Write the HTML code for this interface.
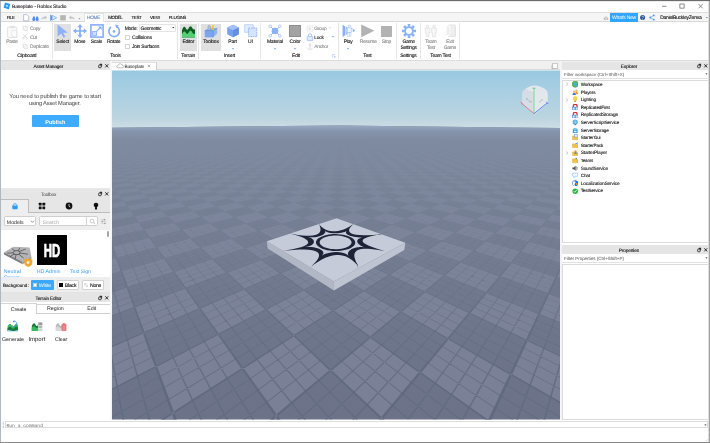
<!DOCTYPE html>
<html><head><meta charset="utf-8"><title>Baseplate - Roblox Studio</title>
<style>
html,body{margin:0;padding:0;background:#fff;}
body{width:710px;height:443px;overflow:hidden;position:relative;font-family:"Liberation Sans",sans-serif;}
#app{will-change:transform;position:absolute;left:0;top:0;width:710px;height:443px;overflow:hidden;background:#fff;}
#app div,#app svg{position:absolute;box-sizing:border-box;}
.t{white-space:nowrap;line-height:10px;text-rendering:geometricPrecision;}
.s{text-shadow:0 0 .4px rgba(20,20,20,.6);}
</style></head><body><div id="app">
<svg style="left:3px;top:2px;" width="8" height="8" viewBox="0 0 8 8"><rect x="1.2" y="1.2" width="5.4" height="5.4" fill="#1f9cfd" transform="rotate(14 4 4)"/><rect x="3" y="3" width="1.8" height="1.8" fill="#bfe3ff" transform="rotate(14 4 4)"/></svg>
<div class="t s" style="left:12.00px;top:3px;font-size:4.9px;color:#3a343a;letter-spacing:-0.086px;">Baseplate - Roblox Studio</div>
<svg style="left:655px;top:0px;" width="55" height="12" viewBox="0 0 55 12"><path d="M7 6.3h4.4" stroke="#444" stroke-width=".6"/><rect x="24.9" y="4" width="4.2" height="4.1" fill="none" stroke="#444" stroke-width=".6"/><path d="M43.5 4.1l4.2 4.2m0-4.2l-4.2 4.2" stroke="#444" stroke-width=".6"/></svg>
<div style="left:0px;top:12px;width:710px;height:10px;background:#f5f5f5;border-top:1px solid #dedede;border-bottom:1px solid #d9d9d9;"></div>
<div class="t s" style="left:6.80px;top:13px;font-size:4.4px;color:#222;letter-spacing:-0.373px;">FILE</div>
<svg style="left:22px;top:13px;" width="60" height="9" viewBox="0 0 60 9"><path d="M1.6 1.6h3.2l1.9 1.9v4.3h-5.1z" fill="#fff" stroke="#7a8fb8" stroke-width=".5"/><path d="M10.3 6.6a1.5 1.5 0 1 0 3 0l-.6-3.2h-1.6zM13.7 6.6a1.5 1.5 0 1 0 3 0l-.8-3.2h-1.6z" fill="#4a8df0"/><path d="M19.2 6.8c.3-2.2 1.9-3 3.6-3v-1.2l2.3 2-2.3 2v-1.2c-1.6 0-2.7.3-3.6 1.4z" fill="#c4c4c4"/><path d="M28.3 1.6v6.4l1.6-1.2v-4z" fill="#4a8df0"/><path d="M30.2 2.4l4.6 2.4-4.6 2.4z" fill="#dbe8ff" stroke="#4a8df0" stroke-width=".5"/><rect x="38.2" y="2.2" width="5.6" height="5.2" fill="#b5b5b5"/><path d="M52.8 6.8c-.3-2.2-1.9-3-3.6-3v-1.2l-2.3 2 2.3 2v-1.2c1.6 0 2.7.3 3.6 1.4z" fill="#c4c4c4"/><path d="M56.6 5.2h1.8l-.9 1.2z" fill="#4a8df0"/></svg>
<div style="left:84px;top:13px;width:19.5px;height:9px;background:#fff;border:1px solid #e4e4e4;border-bottom:none;"></div>
<div class="t s" style="left:87.00px;top:14px;font-size:4.8px;color:#7fb0f7;letter-spacing:-0.300px;">HOME</div>
<div class="t s" style="left:108.20px;top:13px;font-size:4.6px;color:#222;letter-spacing:-0.432px;">MODEL</div>
<div class="t s" style="left:131.50px;top:13px;font-size:4.5px;color:#222;letter-spacing:-0.400px;">TEST</div>
<div class="t s" style="left:149.90px;top:13px;font-size:4.4px;color:#222;letter-spacing:-0.361px;">VIEW</div>
<div class="t s" style="left:168.70px;top:13px;font-size:4.5px;color:#222;letter-spacing:-0.351px;">PLUGINS</div>
<svg style="left:603px;top:13px;" width="6" height="9" viewBox="0 0 6 9"><path d="M1 5.6l2-1.9 2 1.9v0.6h-4z" fill="none" stroke="#777" stroke-width=".5"/></svg>
<div style="left:610px;top:13px;width:28px;height:9px;background:#32a6fe;"></div>
<div class="t" style="left:612.07px;top:13px;font-size:5px;color:#fff;letter-spacing:-0.265px;">What's New</div>
<svg style="left:639px;top:13px;" width="18" height="9" viewBox="0 0 18 9"><circle cx="3.6" cy="4.5" r="2.5" fill="#2a4fa8"/><path d="M2.9 3.9a.8.8 0 1 1 1.1.8c-.3.2-.4.3-.4.7" fill="none" stroke="#fff" stroke-width=".6"/><circle cx="3.6" cy="6.2" r=".35" fill="#fff"/><path d="M14.8 2.4l-3.6 2.1 3.6 2.1" fill="none" stroke="#4a8df0" stroke-width=".6"/><circle cx="14.8" cy="2.4" r=".9" fill="#4a8df0"/><circle cx="11.2" cy="4.5" r=".9" fill="#4a8df0"/><circle cx="14.8" cy="6.6" r=".9" fill="#4a8df0"/></svg>
<div class="t s" style="left:660.20px;top:13px;font-size:5px;color:#222;letter-spacing:-0.238px;">DanielBuckleyZenva</div>
<svg style="left:704px;top:15px;" width="5" height="5" viewBox="0 0 5 5"><path d="M1.6 2h2.2l-1.1 1.3z" fill="#4a8df0"/></svg>
<div style="left:52px;top:23px;width:1px;height:36px;background:#e6e6e6;"></div>
<div style="left:177px;top:23px;width:1px;height:36px;background:#e6e6e6;"></div>
<div style="left:198.1px;top:23px;width:1px;height:36px;background:#e6e6e6;"></div>
<div style="left:259.9px;top:23px;width:1px;height:36px;background:#e6e6e6;"></div>
<div style="left:337.5px;top:23px;width:1px;height:36px;background:#e6e6e6;"></div>
<div style="left:395.8px;top:23px;width:1px;height:36px;background:#e6e6e6;"></div>
<div style="left:420.2px;top:23px;width:1px;height:36px;background:#e6e6e6;"></div>
<div style="left:459.2px;top:23px;width:1px;height:36px;background:#e6e6e6;"></div>
<div style="left:54px;top:23.5px;width:17px;height:27px;background:#e0e0e0;"></div>
<div style="left:180px;top:23.5px;width:16.8px;height:27px;background:#e0e0e0;"></div>
<div style="left:200.6px;top:23.5px;width:20.1px;height:27px;background:#e0e0e0;"></div>
<svg style="left:5px;top:24px;" width="15" height="15" viewBox="0 0 15 15"><rect x="2.6" y="3" width="9.2" height="10.6" rx=".6" fill="#fafafa" stroke="#d2d2d2" stroke-width=".6"/><rect x="5" y="1.8" width="4.4" height="2.4" fill="#e2e2e2"/><path d="M7 6.5h3.2l1.6 1.6v4.6h-4.8z" fill="#fff" stroke="#d2d2d2" stroke-width=".5"/></svg>
<div class="t s" style="left:6.15px;top:37px;font-size:5px;color:#b4b4b4;letter-spacing:-0.256px;">Paste</div>
<svg style="left:21px;top:24px;" width="8" height="26" viewBox="0 0 8 26"><path d="M2 2h3v1h1.6v3.6h-3v-1h-1.6z" fill="#f4f4f4" stroke="#d0d0d0" stroke-width=".5"/><path d="M2.2 10.4l3.8 3.6M5.8 10.4l-3.8 3.6" stroke="#cfcfcf" stroke-width=".7"/><circle cx="2.4" cy="14.4" r=".9" fill="none" stroke="#cfcfcf" stroke-width=".5"/><circle cx="5.6" cy="14.4" r=".9" fill="none" stroke="#cfcfcf" stroke-width=".5"/><path d="M2 20h3v1h1.6v3.6h-3v-1h-1.6z" fill="#f4f4f4" stroke="#d0d0d0" stroke-width=".5"/></svg>
<div class="t s" style="left:30.00px;top:25px;font-size:4.9px;color:#b4b4b4;letter-spacing:-0.285px;">Copy</div>
<div class="t s" style="left:30.00px;top:33px;font-size:5px;color:#b4b4b4;letter-spacing:-0.259px;">Cut</div>
<div class="t s" style="left:30.00px;top:42px;font-size:5px;color:#b4b4b4;letter-spacing:-0.232px;">Duplicate</div>
<div class="t s" style="left:17.17px;top:51px;font-size:5px;color:#2a2a2a;letter-spacing:-0.238px;">Clipboard</div>
<svg style="left:56px;top:23.7px;" width="14" height="14" viewBox="0 0 14 14"><path d="M1.6 .6l10.2 8.2h-4.6l2.2 4-1.9 1-2.2-4.2-3.7 3z" fill="#8ab1fc"/></svg>
<div class="t s" style="left:56.35px;top:37px;font-size:5px;color:#2a2a2a;letter-spacing:-0.232px;">Select</div>
<svg style="left:73px;top:23.7px;" width="14" height="14" viewBox="0 0 14 14"><path d="M7 2v10M2 7h10" stroke="#86aefb" stroke-width="1.700"/><path d="M7 0l2.700 3.200h-5.400zM7 14l2.700-3.200h-5.400zM0 7l3.200-2.700v5.400zM14 7l-3.200-2.700v5.400z" fill="#86aefb"/></svg>
<div class="t s" style="left:74.30px;top:37px;font-size:5px;color:#2a2a2a;letter-spacing:-0.306px;">Move</div>
<svg style="left:89.6px;top:23.7px;" width="14" height="14" viewBox="0 0 14 14"><rect x=".9" y=".9" width="12.200" height="12.200" fill="#fff" stroke="#86aefb" stroke-width="1.600"/><rect x="2.6" y="7.4" width="4" height="4" fill="#cfe0ff" stroke="#86aefb" stroke-width=".8"/><path d="M6.6 7.4l4.2-4.2" stroke="#86aefb" stroke-width="1.1"/><path d="M11.6 2.4v3.6l-3.6-3.6z" fill="#86aefb"/></svg>
<div class="t s" style="left:90.77px;top:37px;font-size:5px;color:#2a2a2a;letter-spacing:-0.250px;">Scale</div>
<svg style="left:106.6px;top:23.7px;" width="14" height="14" viewBox="0 0 14 14"><path d="M9.6 2.600a5.300 5.300 0 1 1-5.600.4" fill="none" stroke="#86aefb" stroke-width="1.700"/><path d="M8.2 .4l3.6 1.2-2.6 2.6z" fill="#86aefb"/><circle cx="7" cy="7.4" r="1.3" fill="#86aefb"/></svg>
<div class="t s" style="left:106.97px;top:37px;font-size:5px;color:#2a2a2a;letter-spacing:-0.246px;">Rotate</div>
<div class="t s" style="left:124.70px;top:24px;font-size:5px;color:#2a2a2a;letter-spacing:-0.259px;">Mode:</div>
<div style="left:139px;top:23.5px;width:37.2px;height:8.1px;background:#fff;border:1px solid #e4e4e4;border-radius:1px;"></div>
<div class="t s" style="left:140.60px;top:24px;font-size:5px;color:#2a2a2a;letter-spacing:-0.256px;">Geometric</div>
<svg style="left:171px;top:25px;" width="5" height="5" viewBox="0 0 5 5"><path d="M1.2 2h2.2l-1.1 1.3z" fill="#222"/></svg>
<div style="left:125.1px;top:35px;width:4.7px;height:4.7px;background:#fff;border:.6px solid #d6d6d6;"></div>
<div style="left:125.1px;top:44.2px;width:4.7px;height:4.7px;background:#fff;border:.6px solid #d6d6d6;"></div>
<div class="t s" style="left:131.90px;top:33px;font-size:5.1px;color:#2a2a2a;letter-spacing:-0.193px;">Collisions</div>
<div class="t s" style="left:131.90px;top:42px;font-size:5px;color:#2a2a2a;letter-spacing:-0.230px;">Join Surfaces</div>
<div class="t s" style="left:110.15px;top:51px;font-size:5px;color:#2a2a2a;letter-spacing:-0.233px;">Tools</div>
<svg style="left:181.8px;top:25.4px;" width="13.6" height="12.6" viewBox="0 0 13.6 12.6"><path d="M0 5.200c1.200-3.400 2.600-4.400 3.700-2.100c1 2.100 1.900 2.100 3 0c1.200-2.500 2.600-2.500 3.600 0c.9 1.900 1.900 2 3.300.2v9.300h-13.600z" fill="#0c5f22"/><path d="M0 9.300c1.200-3 2.600-3.800 3.700-1.700c1 1.900 1.900 1.900 3 0c1.200-2.300 2.600-2.300 3.600 0c.9 1.700 1.900 1.800 3.300.2v4.800h-13.600z" fill="#56cf74"/><path d="M8.200 1.800l1.800-1.600 2 2.600" fill="none" stroke="#cfd8cf" stroke-width=".4"/></svg>
<div class="t s" style="left:182.42px;top:37px;font-size:5px;color:#2a2a2a;letter-spacing:-0.218px;">Editor</div>
<div class="t s" style="left:181.22px;top:51px;font-size:5px;color:#2a2a2a;letter-spacing:-0.218px;">Terrain</div>
<svg style="left:203.6px;top:23.7px;" width="14" height="14" viewBox="0 0 14 14"><path d="M.8 6.600l4-2.600h8.400v5.400l-4 3.800h-8.400z" fill="#8db3f2"/><path d="M.8 6.600h8.400v6.600h-8.400z" fill="#7ba5ec"/><path d="M.8 6.600h8.400l4-2.600M9.200 6.600v6.600" stroke="#4d7fd6" stroke-width=".5" fill="none"/><rect x="8.100" y="1.200" width="1.700" height="5" fill="#f2c230"/><path d="M4 5.600v-3.400l1.200-1.200 1.200 1.200v3.400" fill="#b8c4d6" stroke="#6d7f9c" stroke-width=".4"/></svg>
<div class="t s" style="left:203.14px;top:37px;font-size:5px;color:#2a2a2a;letter-spacing:-0.246px;">Toolbox</div>
<svg style="left:225.6px;top:23.7px;" width="14" height="14" viewBox="0 0 14 14"><path d="M7 .8l5.800 2.600v6.800l-5.800 3-5.800-3v-6.800z" fill="#76a1ee"/><path d="M7 .8l5.800 2.600-5.800 2.800-5.800-2.800z" fill="#a3c2f8"/><path d="M7 6.200v7l5.800-3v-6.800z" fill="#638fe3"/></svg>
<div class="t s" style="left:228.37px;top:37px;font-size:5px;color:#2a2a2a;letter-spacing:-0.229px;">Part</div>
<svg style="left:230.5px;top:46.5px;" width="4" height="4" viewBox="0 0 4 4"><path d="M.9 1.200h2.200l-1.100 1.400z" fill="#4a8df0"/></svg>
<svg style="left:243.5px;top:23.7px;" width="14" height="14" viewBox="0 0 14 14"><rect x=".8" y=".8" width="8.400" height="7.400" fill="#e2ecff" stroke="#a9c5fa" stroke-width=".7"/><rect x="4.600" y="4" width="8.200" height="8.600" fill="#d5e4ff" stroke="#86aefb" stroke-width=".9" stroke-dasharray="1.600 .8"/></svg>
<div class="t s" style="left:248.05px;top:37px;font-size:5px;color:#2a2a2a;letter-spacing:-0.250px;">UI</div>
<div class="t s" style="left:223.77px;top:51px;font-size:5px;color:#2a2a2a;letter-spacing:-0.208px;">Insert</div>
<svg style="left:268px;top:23.7px;" width="14" height="14" viewBox="0 0 14 14"><path d="M2.400 2.400l9.200 9.200M11.600 2.400l-9.200 9.200" stroke="#86aefb" stroke-width=".8"/><circle cx="7" cy="7" r="3.300" fill="#8ab1fc"/><circle cx="2.200" cy="2.200" r="1.300" fill="#fff" stroke="#86aefb" stroke-width=".6"/><circle cx="11.800" cy="2.200" r="1.300" fill="#fff" stroke="#86aefb" stroke-width=".6"/><circle cx="2.200" cy="11.800" r="1.300" fill="#fff" stroke="#86aefb" stroke-width=".6"/><circle cx="11.800" cy="11.800" r="1.300" fill="#fff" stroke="#86aefb" stroke-width=".6"/></svg>
<div class="t s" style="left:266.90px;top:37px;font-size:5px;color:#2a2a2a;letter-spacing:-0.222px;">Material</div>
<svg style="left:273px;top:46.5px;" width="4" height="4" viewBox="0 0 4 4"><path d="M.9 1.200h2.200l-1.100 1.400z" fill="#4a8df0"/></svg>
<div style="left:288.9px;top:24.9px;width:12.4px;height:12.2px;background:#a3a3a3;border:.6px solid #8f8f8f;"></div>
<div class="t s" style="left:289.62px;top:37px;font-size:5px;color:#2a2a2a;letter-spacing:-0.239px;">Color</div>
<svg style="left:293px;top:46.5px;" width="4" height="4" viewBox="0 0 4 4"><path d="M.9 1.200h2.200l-1.100 1.400z" fill="#4a8df0"/></svg>
<svg style="left:305.5px;top:24.5px;" width="8" height="26" viewBox="0 0 8 26"><rect x="1" y="1" width="5.800" height="5" fill="none" stroke="#cfcfcf" stroke-width=".6" stroke-dasharray="1.400 .8"/><rect x="2.600" y="2.400" width="2.600" height="2.200" fill="#e0e0e0"/><path d="M2.400 11.400v-1.200a1.600 1.600 0 0 1 3.200 0v1.200" fill="none" stroke="#86aefb" stroke-width=".7"/><rect x="1.200" y="11.400" width="5.600" height="4.200" rx=".6" fill="#dfeaff" stroke="#86aefb" stroke-width=".6"/><path d="M4 19.400v5.200M2.800 20.800h2.400M1.600 22.800c.3 1.400 1.400 1.900 2.400 1.900s2.100-.5 2.400-1.900" fill="none" stroke="#cfcfcf" stroke-width=".6"/><circle cx="4" cy="18.900" r=".7" fill="none" stroke="#cfcfcf" stroke-width=".5"/></svg>
<div class="t s" style="left:314.20px;top:25px;font-size:4.8px;color:#b4b4b4;letter-spacing:-0.228px;">Group</div>
<svg style="left:327.9px;top:26px;" width="4" height="4" viewBox="0 0 4 4"><path d="M.9 1.800h2.200" stroke="#bbb" stroke-width=".5"/></svg>
<div class="t s" style="left:314.20px;top:34px;font-size:4.9px;color:#2a2a2a;letter-spacing:-0.213px;">Lock</div>
<svg style="left:331.2px;top:35.3px;" width="4" height="4" viewBox="0 0 4 4"><path d="M.9 1.200h2.200l-1.100 1.400z" fill="#4a8df0"/></svg>
<div class="t s" style="left:314.20px;top:43px;font-size:4.9px;color:#b4b4b4;letter-spacing:-0.254px;">Anchor</div>
<div class="t s" style="left:292.02px;top:51px;font-size:5px;color:#2a2a2a;letter-spacing:-0.215px;">Edit</div>
<svg style="left:331.6px;top:54px;" width="4" height="4" viewBox="0 0 4 4"><path d="M.6 .6h2.600M.6 .6v2.600" stroke="#8ab1fc" stroke-width=".5"/><path d="M3.400 1.600v1.800h-1.800z" fill="#8ab1fc"/></svg>
<svg style="left:341.5px;top:23.7px;" width="14" height="14" viewBox="0 0 14 14"><path d="M.6 .6v12.400l2.400-1.800v-8.600z" fill="#86aefb"/><path d="M3.400 2.600v8.600l2.200-1v-6.600z" fill="#a9c7fb"/><circle cx="7.400" cy="2.300" r="1.300" fill="#e8f0ff" stroke="#8db4f5" stroke-width=".4"/><rect x="5.600" y="3.900" width="3.600" height="4.700" fill="#eef4ff" stroke="#8db4f5" stroke-width=".4"/><rect x="4.300" y="4" width="1.200" height="3.600" fill="#eef4ff" stroke="#8db4f5" stroke-width=".3"/><rect x="9.300" y="4" width="1.200" height="3.600" fill="#eef4ff" stroke="#8db4f5" stroke-width=".3"/><rect x="5.800" y="8.700" width="1.500" height="3.600" fill="#eef4ff" stroke="#8db4f5" stroke-width=".3"/><rect x="7.500" y="8.700" width="1.500" height="3.600" fill="#eef4ff" stroke="#8db4f5" stroke-width=".3"/><path d="M11 5l2.400 1.600-2.400 1.600z" fill="#86aefb"/></svg>
<div class="t s" style="left:343.82px;top:37px;font-size:5px;color:#2a2a2a;letter-spacing:-0.243px;">Play</div>
<svg style="left:346.3px;top:46.5px;" width="4" height="4" viewBox="0 0 4 4"><path d="M.9 1.200h2.200l-1.100 1.400z" fill="#4a8df0"/></svg>
<svg style="left:361px;top:23.7px;" width="14" height="14" viewBox="0 0 14 14"><path d="M.2 .4l13.200 6.300-13.200 6.500z" fill="#b3b3b3"/></svg>
<div class="t s" style="left:359.72px;top:37px;font-size:5px;color:#b4b4b4;letter-spacing:-0.310px;">Resume</div>
<div style="left:381px;top:25.8px;width:11.2px;height:10.9px;background:#b3b3b3;"></div>
<div class="t s" style="left:381.87px;top:37px;font-size:5px;color:#b4b4b4;letter-spacing:-0.257px;">Stop</div>
<div class="t s" style="left:363.17px;top:51px;font-size:5px;color:#2a2a2a;letter-spacing:-0.229px;">Test</div>
<svg style="left:401.5px;top:23.7px;" width="14" height="14" viewBox="0 0 14 14"><rect x="5.700" y="-.1" width="2.600" height="2.800" rx=".6" fill="#8ab1fc" transform="rotate(0 7 7)"/><rect x="5.700" y="-.1" width="2.600" height="2.800" rx=".6" fill="#8ab1fc" transform="rotate(45 7 7)"/><rect x="5.700" y="-.1" width="2.600" height="2.800" rx=".6" fill="#8ab1fc" transform="rotate(90 7 7)"/><rect x="5.700" y="-.1" width="2.600" height="2.800" rx=".6" fill="#8ab1fc" transform="rotate(135 7 7)"/><rect x="5.700" y="-.1" width="2.600" height="2.800" rx=".6" fill="#8ab1fc" transform="rotate(180 7 7)"/><rect x="5.700" y="-.1" width="2.600" height="2.800" rx=".6" fill="#8ab1fc" transform="rotate(225 7 7)"/><rect x="5.700" y="-.1" width="2.600" height="2.800" rx=".6" fill="#8ab1fc" transform="rotate(270 7 7)"/><rect x="5.700" y="-.1" width="2.600" height="2.800" rx=".6" fill="#8ab1fc" transform="rotate(315 7 7)"/><circle cx="7" cy="7" r="3.900" fill="none" stroke="#8ab1fc" stroke-width="1.900"/></svg>
<div class="t s" style="left:402.47px;top:37px;font-size:5px;color:#2a2a2a;letter-spacing:-0.340px;">Game</div>
<div class="t s" style="left:400.47px;top:43px;font-size:5px;color:#2a2a2a;letter-spacing:-0.226px;">Settings</div>
<div class="t s" style="left:400.27px;top:51px;font-size:5px;color:#2a2a2a;letter-spacing:-0.226px;">Settings</div>
<svg style="left:424px;top:23.7px;" width="14" height="14" viewBox="0 0 14 14"><circle cx="3.6" cy="2.400" r="1.400" fill="#f6f6f6" stroke="#d4d4d4" stroke-width=".5"/><path d="M1.2 4.200h4.800v4.400h-1v4h-2.800v-4h-1z" fill="#f6f6f6" stroke="#d4d4d4" stroke-width=".5"/><circle cx="10.0" cy="2.400" r="1.400" fill="#f6f6f6" stroke="#d4d4d4" stroke-width=".5"/><path d="M7.6000000000000005 4.200h4.800v4.400h-1v4h-2.800v-4h-1z" fill="#f6f6f6" stroke="#d4d4d4" stroke-width=".5"/></svg>
<div class="t s" style="left:425.30px;top:37px;font-size:5px;color:#b4b4b4;letter-spacing:-0.306px;">Team</div>
<div class="t s" style="left:426.67px;top:43px;font-size:5px;color:#b4b4b4;letter-spacing:-0.229px;">Test</div>
<svg style="left:444px;top:23.7px;" width="13" height="14" viewBox="0 0 13 14"><path d="M4.400 1h7v11.400h-7" fill="#fafafa" stroke="#d4d4d4" stroke-width=".6"/><path d="M7.200 1.600l3.600 1.400v10l-3.600-1z" fill="#f0f0f0" stroke="#d9d9d9" stroke-width=".4"/><circle cx="4" cy="3.800" r="1" fill="none" stroke="#d4d4d4" stroke-width=".5"/><path d="M2.200 7.600l1.800-2 1.800 1.600M4 5.600v3l-1.800 2.600M4 8.600l1.800 2.400" fill="none" stroke="#d4d4d4" stroke-width=".6"/></svg>
<div class="t s" style="left:446.15px;top:37px;font-size:5px;color:#b4b4b4;letter-spacing:-0.208px;">Exit</div>
<div class="t s" style="left:443.77px;top:43px;font-size:5px;color:#b4b4b4;letter-spacing:-0.340px;">Game</div>
<div class="t s" style="left:430.19px;top:51px;font-size:5px;color:#2a2a2a;letter-spacing:-0.252px;">Team Test</div>
<div style="left:0px;top:59.5px;width:710px;height:1px;background:#dcdcdc;"></div>
<div style="left:0px;top:60.5px;width:710px;height:1px;background:#f0f0f0;"></div>
<div style="left:1px;top:61px;width:109px;height:9px;background:#e5e5e5;"></div>
<div style="left:110px;top:61px;width:2px;height:359px;background:#f6f6f6;"></div>
<div style="left:1px;top:61px;width:109px;height:9px;background:#e5e5e5;"></div>
<div class="t s" style="left:33.50px;top:63px;font-size:4.8px;color:#222;letter-spacing:-0.207px;">Asset Manager</div>
<svg style="left:97.7px;top:62.7px;" width="11" height="6" viewBox="0 0 11 6"><rect x="1.700" y=".7" width="2.400" height="2.700" rx=".4" fill="#2b2b2b"/><rect x=".7" y="2.100" width="2.400" height="2.600" rx=".4" fill="#fff" stroke="#2b2b2b" stroke-width=".9"/><path d="M7.300 1.300l2.900 3.100m0-3.100l-2.900 3.100" stroke="#111" stroke-width=".85"/></svg>
<div style="left:1px;top:70px;width:109px;height:118px;background:#fff;"></div>
<div class="t" style="left:9.30px;top:92px;font-size:5.8px;color:#3a3a3a;letter-spacing:-0.110px;">You need to publish the game to start</div>
<div class="t" style="left:29.10px;top:99px;font-size:5.7px;color:#3a3a3a;letter-spacing:-0.140px;">using Asset Manager.</div>
<div style="left:31.8px;top:114.6px;width:47.3px;height:12.1px;background:#3dabfe;border-radius:1px;"></div>
<div class="t" style="left:45.19px;top:118px;font-size:5.6px;color:#fff;font-weight:bold;">Publish</div>
<div style="left:1px;top:188px;width:109px;height:1.2px;background:#e9e9e9;"></div>
<div style="left:1px;top:189px;width:109px;height:103px;background:#eeeeee;"></div>
<div style="left:1px;top:189px;width:109px;height:9.5px;background:#e6e6e6;"></div>
<div class="t" style="left:41.12px;top:191px;font-size:4.8px;color:#444;letter-spacing:-0.197px;">Toolbox</div>
<svg style="left:97.7px;top:190.7px;" width="11" height="6" viewBox="0 0 11 6"><rect x="1.700" y=".7" width="2.400" height="2.700" rx=".4" fill="#2b2b2b"/><rect x=".7" y="2.100" width="2.400" height="2.600" rx=".4" fill="#fff" stroke="#2b2b2b" stroke-width=".9"/><path d="M7.300 1.300l2.900 3.100m0-3.100l-2.900 3.100" stroke="#111" stroke-width=".85"/></svg>
<div style="left:1px;top:198.5px;width:109px;height:14px;background:#e6e6e6;border-bottom:1px solid #bdbdbd;"></div>
<div style="left:1px;top:198.5px;width:27.6px;height:14px;background:#eeeeee;border-top:1px solid #bdbdbd;border-right:1px solid #bdbdbd;"></div>
<svg style="left:10.5px;top:202px;" width="8" height="8" viewBox="0 0 8 8"><path d="M2.400 3.400a1.600 1.800 0 0 1 3.200 0" fill="none" stroke="#2b9bf4" stroke-width=".8"/><path d="M1 3.400h6l-.6 3.800h-4.800z" fill="#2b9bf4"/></svg>
<svg style="left:37.5px;top:202px;" width="8" height="8" viewBox="0 0 8 8"><rect x=".8" y=".8" width="2.800" height="2.800" rx=".4" fill="#111"/><rect x="4.400" y=".8" width="2.800" height="2.800" rx=".4" fill="#111"/><rect x=".8" y="4.400" width="2.800" height="2.800" rx=".4" fill="#111"/><rect x="4.400" y="4.400" width="2.800" height="2.800" rx=".4" fill="#111"/></svg>
<svg style="left:64.8px;top:202px;" width="8" height="8" viewBox="0 0 8 8"><circle cx="4" cy="4" r="3.400" fill="#111"/><path d="M4 2v2.200l1.400 1" stroke="#fff" stroke-width=".7" fill="none"/></svg>
<svg style="left:92px;top:202px;" width="8" height="8" viewBox="0 0 8 8"><circle cx="4" cy="3" r="2.300" fill="#111"/><rect x="3" y="4.800" width="2" height="2.600" rx=".5" fill="#111"/></svg>
<div style="left:3.7px;top:216.3px;width:32.6px;height:10.2px;background:#fff;border:.7px solid #cfcfcf;border-radius:1.500px;"></div>
<div class="t" style="left:6.80px;top:218px;font-size:5.2px;color:#222;letter-spacing:0.023px;">Models</div>
<svg style="left:29.6px;top:219px;" width="5" height="5" viewBox="0 0 5 5"><path d="M1 1.800l1.500 1.500 1.500-1.500" fill="none" stroke="#444" stroke-width=".6"/></svg>
<div style="left:38.5px;top:216.3px;width:59.2px;height:10.2px;background:#fff;border:.7px solid #cfcfcf;border-radius:1.500px;"></div>
<div style="left:86.3px;top:216.6px;width:0.7px;height:9.6px;background:#d4d4d4;"></div>
<div class="t" style="left:42.60px;top:218px;font-size:5.2px;color:#a9a9a9;">Search</div>
<svg style="left:88.5px;top:218px;" width="7" height="7" viewBox="0 0 7 7"><circle cx="3" cy="3" r="1.900" fill="none" stroke="#aaa" stroke-width=".6"/><path d="M4.400 4.400l1.800 1.800" stroke="#aaa" stroke-width=".7"/></svg>
<svg style="left:100px;top:218px;" width="7" height="7" viewBox="0 0 7 7"><path d="M.8 1.600h5.400M.8 3.500h5.400M.8 5.400h5.400" stroke="#b9b9b9" stroke-width=".5"/><rect x="3.800" y=".9" width="1.200" height="1.400" fill="#9a9a9a"/><rect x="1.600" y="2.800" width="1.200" height="1.400" fill="#9a9a9a"/><rect x="4.200" y="4.700" width="1.200" height="1.400" fill="#9a9a9a"/></svg>
<div style="left:1px;top:229.7px;width:109px;height:47.5px;background:#fff;"></div>
<div style="left:106.5px;top:231px;width:2px;height:5.8px;background:#a6a6a6;border-radius:1px;"></div>
<svg style="left:3px;top:244px;" width="31" height="24" viewBox="0 0 31 24"><path d="M1 8.300l9.600-5.600 16 .9 1.800 9-8.800 5.200z" fill="#b4b4b7"/><path d="M1 8.300l18.600 9.500v2.400l-18.600-9.700z" fill="#808085"/><path d="M19.600 17.800l8.800-5.200v2.300l-8.800 5.300z" fill="#97979c"/><path d="M13.600 8.600l-5-4.400M13.600 8.600l3.400-4.800M13.600 8.600l9-3.600M13.600 8.600l11.400 1.600M13.600 8.600l7 5.400M13.600 8.600l-1.600 6.600M13.600 8.600l-9.400.6M13.600 8.600l-6.600 4" stroke="#3a3a3e" stroke-width=".8" opacity=".8"/><ellipse cx="13.600" cy="8.600" rx="3.400" ry="2" fill="#b4b4b7" stroke="#3a3a3e" stroke-width=".7"/><path d="M21.300 15.500l4-1 4 1v3.600c0 2-1.800 3.300-4 4-2.200-.7-4-2-4-4z" fill="#f2a72a"/><path d="M23.400 18.600l1.400-1.600 1.800.6-.4 2-1.800.6z" fill="#fff" opacity=".9"/></svg>
<div style="left:36.8px;top:235.1px;width:30px;height:30px;background:#000;"></div>
<svg style="left:36.8px;top:235.1px;" width="30" height="30" viewBox="0 0 30 30"><text x="15" y="21.700" font-family="Liberation Sans,sans-serif" font-weight="bold" font-size="17.500" text-anchor="middle" fill="#fff" stroke="#fff" stroke-width=".7" textLength="16.400" lengthAdjust="spacingAndGlyphs">HD</text></svg>
<div class="t" style="left:3.70px;top:267px;font-size:5.3px;color:#3d9ff5;letter-spacing:0.016px;">Neutral</div>
<div class="t" style="left:36.80px;top:267px;font-size:5.3px;color:#3d9ff5;letter-spacing:-0.020px;">HD Admin</div>
<div class="t" style="left:70.10px;top:267px;font-size:5.1px;color:#3d9ff5;letter-spacing:-0.020px;">Text Sign</div>
<div style="left:1px;top:272px;width:109px;height:5.2px;overflow:hidden">
<div class="t" style="left:2.70px;top:1px;font-size:5.2px;color:#3d9ff5;">Spawn</div>
</div>
<div style="left:1px;top:277.2px;width:109px;height:14.8px;background:#eeeeee;"></div>
<div class="t s" style="left:3.00px;top:281px;font-size:4.6px;color:#222;letter-spacing:-0.012px;">Background:</div>
<div style="left:30.9px;top:279.9px;width:23.2px;height:9.7px;background:#3aa9fd;border-radius:1px;"></div>
<div style="left:32.9px;top:282.5px;width:4.2px;height:4.4px;background:#fff;border:.5px solid #d0d0d0;"></div>
<div class="t" style="left:38.80px;top:281px;font-size:5.2px;color:#fff;letter-spacing:-0.256px;">White</div>
<div style="left:56.6px;top:279.9px;width:22.3px;height:9.7px;background:#fff;border:.6px solid #d2d2d2;border-radius:1px;"></div>
<div style="left:58.6px;top:282.5px;width:4.2px;height:4.4px;background:#000;"></div>
<div class="t s" style="left:64.80px;top:281px;font-size:5.2px;color:#222;letter-spacing:-0.245px;">Black</div>
<div style="left:81.6px;top:279.9px;width:22.7px;height:9.7px;background:#fff;border:.6px solid #d2d2d2;border-radius:1px;"></div>
<svg style="left:83.6px;top:282.5px;" width="4.4" height="4.4" viewBox="0 0 4.4 4.4"><rect width="4.400" height="4.400" fill="#fff" stroke="#ccc" stroke-width=".5"/><rect x=".3" y=".3" width="1.900" height="1.900" fill="#d6d6d6"/><rect x="2.200" y="2.200" width="1.900" height="1.900" fill="#d6d6d6"/></svg>
<div class="t s" style="left:90.00px;top:281px;font-size:5.2px;color:#222;letter-spacing:-0.299px;">None</div>
<div style="left:1px;top:291.8px;width:109px;height:1.2px;background:#e3e3e3;"></div>
<div style="left:1px;top:293px;width:109px;height:9.4px;background:#e5e5e5;"></div>
<div class="t s" style="left:35.42px;top:295px;font-size:4.8px;color:#222;letter-spacing:-0.170px;">Terrain Editor</div>
<svg style="left:97.7px;top:294.9px;" width="11" height="6" viewBox="0 0 11 6"><rect x="1.700" y=".7" width="2.400" height="2.700" rx=".4" fill="#2b2b2b"/><rect x=".7" y="2.100" width="2.400" height="2.600" rx=".4" fill="#fff" stroke="#2b2b2b" stroke-width=".9"/><path d="M7.300 1.300l2.900 3.100m0-3.100l-2.900 3.100" stroke="#111" stroke-width=".85"/></svg>
<div style="left:1px;top:302.4px;width:109px;height:117px;background:#fff;"></div>
<div style="left:36px;top:304px;width:74px;height:9.8px;background:#fff;border-top:1px solid #d4d4d4;border-bottom:1px solid #cfcfcf;"></div>
<div style="left:1px;top:302.9px;width:35.6px;height:11px;background:#fff;border-top:1px solid #d4d4d4;border-right:1px solid #cfcfcf;"></div>
<div class="t" style="left:10.65px;top:305px;font-size:5.3px;color:#222;">Create</div>
<div class="t" style="left:47.00px;top:304px;font-size:5.3px;color:#222;">Region</div>
<div class="t" style="left:87.23px;top:304px;font-size:5.3px;color:#222;">Edit</div>
<svg style="left:7.2px;top:319.5px;" width="12" height="12" viewBox="0 0 12 12"><path d="M.5 6.500c1.500-3 3-3.600 4.200-1.300 1 2 2 1.800 3-.2 1-1.800 2.200-1.600 3.300.6v5.400h-10.500z" fill="#3fb863"/><path d="M.5 8.500c1.500-2 3-2.600 4.200-.8 1 1.500 2 1.400 3-.2 1-1.300 2.200-1.200 3.300.4v3.100h-10.500z" fill="#167a36"/><path d="M.5 9.800c2 .2 4 1.200 6 1.200s3-.8 4.500-1v1.500h-10.500z" fill="#8fd0e8"/><path d="M6.200 1.400a2.700 2.700 0 1 1 -1.200 4" fill="none" stroke="#4a8df0" stroke-width=".8"/><path d="M7.300 .3l-1.700 1.100 1.600 1.400z" fill="#4a8df0"/></svg>
<svg style="left:31.2px;top:319.5px;" width="12" height="12" viewBox="0 0 12 12"><path d="M.8 6c1.300-3 2.600-3.600 3.700-1.300.9 2 1.700 1.800 2.600-.2v6.500h-6.300z" fill="#167a36"/><path d="M.8 8c1.300-2 2.600-2.600 3.700-.8.900 1.500 1.700 1.400 2.600-.2v4h-6.300z" fill="#3fb863"/><rect x="7.300" y="2.400" width="4" height="2.600" fill="#9a9a9a"/><rect x="7.300" y="5.400" width="4" height="2.600" fill="#b5b5b5"/><rect x="7.300" y="8.400" width="4" height="2.600" fill="#cfcfcf"/></svg>
<svg style="left:55.2px;top:319.5px;" width="12" height="12" viewBox="0 0 12 12"><path d="M.8 6c1.300-3 2.600-3.600 3.700-1.300.9 2 1.700 1.800 2.600-.2v6.500h-6.300z" fill="#b9b9b9"/><path d="M.8 8c1.300-2 2.600-2.600 3.700-.8.900 1.500 1.700 1.400 2.600-.2v4h-6.300z" fill="#d9d9d9"/><rect x="7" y="4.800" width="4" height="5.800" rx=".5" fill="#f08a8a" stroke="#d84a4a" stroke-width=".6"/><path d="M6.500 4.300h5M8 3.500h2" stroke="#d84a4a" stroke-width=".6"/></svg>
<div class="t" style="left:2.00px;top:335px;font-size:5.3px;color:#222;letter-spacing:-0.012px;">Generate</div>
<div class="t" style="left:28.40px;top:335px;font-size:6px;color:#222;letter-spacing:-0.017px;">Import</div>
<div class="t" style="left:54.90px;top:335px;font-size:5.2px;color:#222;letter-spacing:-0.005px;">Clear</div>
<div style="left:1px;top:419.5px;width:708px;height:23px;background:#fff;"></div>
<div style="left:4.7px;top:421.2px;width:703px;height:7.3px;background:#fff;border:.7px solid #dcdcdc;"></div>
<svg style="left:1.5px;top:421px;" width="3" height="8" viewBox="0 0 3 8"><path d="M1.200 .8v6.400" stroke="#777" stroke-width=".7" stroke-dasharray=".7 .7"/></svg>
<div class="t" style="left:6.40px;top:422px;font-size:4.7px;color:#707070;font-family:'Liberation Mono',monospace;">Run a command</div>
<svg style="left:703px;top:422.5px;" width="5" height="5" viewBox="0 0 5 5"><path d="M1.400 1.500h2.200l-1.100 1.300z" fill="#222"/></svg>
<svg style="left:704px;top:437px;" width="5" height="5" viewBox="0 0 5 5"><path d="M4.500 1.500l-3 3M4.500 3.200l-1.300 1.300" stroke="#bbb" stroke-width=".5"/></svg>
<div style="left:560px;top:61px;width:2.4px;height:359px;background:#f4f4f4;"></div>
<div style="left:562.4px;top:61.5px;width:146.6px;height:8.5px;background:#e5e5e5;"></div>
<div class="t s" style="left:620.71px;top:63px;font-size:4.8px;color:#222;letter-spacing:-0.186px;">Explorer</div>
<svg style="left:696.7px;top:62.95px;" width="11" height="6" viewBox="0 0 11 6"><rect x="1.700" y=".7" width="2.400" height="2.700" rx=".4" fill="#2b2b2b"/><rect x=".7" y="2.100" width="2.400" height="2.600" rx=".4" fill="#fff" stroke="#2b2b2b" stroke-width=".9"/><path d="M7.300 1.300l2.900 3.100m0-3.100l-2.900 3.100" stroke="#111" stroke-width=".85"/></svg>
<div style="left:562.4px;top:70px;width:146.6px;height:10px;background:#fff;"></div>
<div style="left:562.4px;top:78px;width:146.6px;height:0.8px;background:#e2e2e2;"></div>
<div class="t s" style="left:564.00px;top:70px;font-size:4.4px;color:#a0a0a0;letter-spacing:0.016px;">Filter workspace (Ctrl+Shift+X)</div>
<svg style="left:703.5px;top:72.2px;" width="5" height="5" viewBox="0 0 5 5"><path d="M1.500 1.500h2l-1 1.200z" fill="#222"/></svg>
<div style="left:562px;top:79.6px;width:147px;height:163.4px;background:#fff;border:.7px solid #dbdbdb;border-right:none;"></div>
<svg style="left:571.8px;top:81.2px;" width="6.4" height="6.4" viewBox="0 0 6.4 6.4"><circle cx="3.200" cy="3.200" r="3.100" fill="#4fc04f"/><path d="M2 1.400c1-.5 2.200-.3 2.600.5.400.9-.6 1.300-.2 2.100.3.700 1.100.6 1 1.400-.6.700-1.500 1-2.400.8-.4-.8 0-1.500-.6-2.100-.5-.5-.9-.8-.9-1.500 0-.5.200-.9.500-1.200z" fill="#49a8ea"/><circle cx="3.200" cy="3.200" r="3.100" fill="none" stroke="#3a9a3e" stroke-width=".4"/></svg>
<div class="t s" style="left:580.70px;top:80px;font-size:4.6px;color:#262626;letter-spacing:-0.136px;">Workspace</div>
<svg style="left:564.8px;top:82.4px;" width="4" height="4" viewBox="0 0 4 4"><path d="M1.200 .5l1.600 1.500-1.600 1.500" fill="none" stroke="#8a8a8a" stroke-width=".5"/></svg>
<svg style="left:571.8px;top:88.793px;" width="6.4" height="6.4" viewBox="0 0 6.4 6.4"><circle cx="2.200" cy="2.800" r="1.200" fill="#f0b27a"/><path d="M.4 6.200c0-1.600 1-2.200 1.800-2.200s1.800.6 1.800 2.200z" fill="#3a78d8"/><circle cx="4.500" cy="1.800" r="1.200" fill="#f0b27a"/><path d="M3 5c0-1.500.8-2 1.500-2s1.700.5 1.700 2.200h-2z" fill="#e8a11c"/></svg>
<div class="t s" style="left:580.70px;top:88px;font-size:4.7px;color:#262626;letter-spacing:-0.110px;">Players</div>
<svg style="left:571.8px;top:96.386px;" width="6.4" height="6.4" viewBox="0 0 6.4 6.4"><circle cx="3.200" cy="2.600" r="2.300" fill="#f7d34a"/><rect x="2.300" y="4.600" width="1.800" height="1.400" fill="#c9a227"/></svg>
<div class="t s" style="left:580.70px;top:95px;font-size:4.6px;color:#262626;letter-spacing:-0.109px;">Lighting</div>
<svg style="left:564.8px;top:97.586px;" width="4" height="4" viewBox="0 0 4 4"><path d="M1.200 .5l1.600 1.500-1.600 1.500" fill="none" stroke="#8a8a8a" stroke-width=".5"/></svg>
<svg style="left:571.8px;top:103.979px;" width="6.4" height="6.4" viewBox="0 0 6.4 6.4"><path d="M1.300 3v-.8a1.900 1.900 0 0 1 3.800 0v.8" fill="none" stroke="#d62c2c" stroke-width="1.200"/><rect x=".3" y="3.100" width="2.700" height="3" fill="#cfe0fa" stroke="#3a6fc8" stroke-width=".5"/><rect x="3.400" y="3.100" width="2.700" height="3" fill="#cfe0fa" stroke="#3a6fc8" stroke-width=".5"/></svg>
<div class="t s" style="left:580.70px;top:103px;font-size:4.6px;color:#262626;letter-spacing:-0.111px;">ReplicatedFirst</div>
<svg style="left:571.8px;top:111.572px;" width="6.4" height="6.4" viewBox="0 0 6.4 6.4"><path d="M1.300 3v-.8a1.900 1.900 0 0 1 3.800 0v.8" fill="none" stroke="#d62c2c" stroke-width="1.200"/><rect x=".3" y="3.100" width="2.700" height="3" fill="#cfe0fa" stroke="#3a6fc8" stroke-width=".5"/><rect x="3.400" y="3.100" width="2.700" height="3" fill="#cfe0fa" stroke="#3a6fc8" stroke-width=".5"/></svg>
<div class="t s" style="left:580.70px;top:111px;font-size:4.8px;color:#262626;letter-spacing:-0.129px;">ReplicatedStorage</div>
<svg style="left:571.8px;top:119.165px;" width="6.4" height="6.4" viewBox="0 0 6.4 6.4"><circle cx="3.200" cy="3" r="2.600" fill="#5aa8e0"/><path d="M1.500 3h3.400M3.200 1.200v3.600" stroke="#d8ecfa" stroke-width=".5"/><rect x="2.400" y="5.200" width="1.600" height="1" fill="#3f7fb8"/></svg>
<div class="t s" style="left:580.70px;top:118px;font-size:4.6px;color:#262626;letter-spacing:-0.108px;">ServerScriptService</div>
<svg style="left:571.8px;top:126.758px;" width="6.4" height="6.4" viewBox="0 0 6.4 6.4"><path d="M1 2.800c0-2 4.400-2 4.400 0z" fill="#bfe0f7" stroke="#2d8fd0" stroke-width=".5"/><rect x=".8" y="2.800" width="4.800" height="3.200" fill="#3d9be0"/><rect x="2" y="3.800" width="2.400" height="1.400" fill="#e6f3fc"/></svg>
<div class="t s" style="left:580.70px;top:126px;font-size:4.6px;color:#262626;letter-spacing:-0.124px;">ServerStorage</div>
<svg style="left:571.8px;top:134.351px;" width="6.4" height="6.4" viewBox="0 0 6.4 6.4"><path d="M.4 1.800h2.400l.6.800h2.600v3.200h-5.600z" fill="#f3c443" stroke="#c9992a" stroke-width=".3"/><rect x="2.400" y=".4" width="3.400" height="2.600" fill="#e8f0fc" stroke="#4a86dc" stroke-width=".4"/></svg>
<div class="t s" style="left:580.70px;top:133px;font-size:4.6px;color:#262626;letter-spacing:-0.114px;">StarterGui</div>
<svg style="left:571.8px;top:141.944px;" width="6.4" height="6.4" viewBox="0 0 6.4 6.4"><path d="M.4 1.800h2.400l.6.800h2.600v3.200h-5.600z" fill="#f3c443" stroke="#c9992a" stroke-width=".3"/><path d="M3 1.800l2.600-1.400.4.800-2.400 1.300z" fill="#4a86dc"/></svg>
<div class="t s" style="left:580.70px;top:141px;font-size:4.6px;color:#262626;letter-spacing:-0.130px;">StarterPack</div>
<svg style="left:571.8px;top:149.537px;" width="6.4" height="6.4" viewBox="0 0 6.4 6.4"><path d="M.4 1.800h2.400l.6.800h2.600v3.200h-5.600z" fill="#f3c443" stroke="#c9992a" stroke-width=".3"/><circle cx="3.600" cy="1.300" r="1.100" fill="#e8943a"/><path d="M2.400 3.800c0-1.200.6-1.500 1.200-1.500s1.200.3 1.200 1.500z" fill="#3a78d8"/></svg>
<div class="t s" style="left:580.70px;top:149px;font-size:4.8px;color:#262626;letter-spacing:-0.139px;">StarterPlayer</div>
<svg style="left:564.8px;top:150.737px;" width="4" height="4" viewBox="0 0 4 4"><path d="M1.200 .5l1.600 1.500-1.600 1.500" fill="none" stroke="#8a8a8a" stroke-width=".5"/></svg>
<svg style="left:571.8px;top:157.13px;" width="6.4" height="6.4" viewBox="0 0 6.4 6.4"><path d="M.4 1.800h2.400l.6.800h2.600v3.200h-5.600z" fill="#f3c443" stroke="#c9992a" stroke-width=".3"/><circle cx="4.200" cy="1.600" r=".9" fill="#888"/></svg>
<div class="t s" style="left:580.70px;top:156px;font-size:4.5px;color:#262626;letter-spacing:-0.171px;">Teams</div>
<svg style="left:571.8px;top:164.723px;" width="6.4" height="6.4" viewBox="0 0 6.4 6.4"><path d="M.4 2.400h1.400l1.800-1.600v5l-1.800-1.600h-1.400z" fill="#555"/><path d="M4.300 1v4.600M5.300 2v2.600" stroke="#666" stroke-width=".5"/></svg>
<div class="t s" style="left:580.70px;top:164px;font-size:4.7px;color:#262626;letter-spacing:-0.155px;">SoundService</div>
<svg style="left:571.8px;top:172.316px;" width="6.4" height="6.4" viewBox="0 0 6.4 6.4"><path d="M.6 1.200h5.200v3h-2.600l-1.200 1.400v-1.400h-1.400z" fill="#fff" stroke="#7fb5ee" stroke-width=".6"/></svg>
<div class="t s" style="left:580.70px;top:171px;font-size:4.6px;color:#262626;letter-spacing:-0.129px;">Chat</div>
<svg style="left:571.8px;top:179.909px;" width="6.4" height="6.4" viewBox="0 0 6.4 6.4"><circle cx="3.200" cy="3.200" r="3" fill="#1f6fd6"/><path d="M1.200 1.600c1.200-.6 2.200-.2 2.400.8.200 1-1 1-1 2s1 1.200.8 2c-1.400-.2-2.800-1.400-2.800-3.200 0-.6.200-1.200.6-1.600z" fill="#fff"/><circle cx="4.800" cy="4" r=".9" fill="#f0a030"/></svg>
<div class="t s" style="left:580.70px;top:180px;font-size:4.8px;color:#262626;letter-spacing:-0.129px;">LocalizationService</div>
<svg style="left:571.8px;top:187.502px;" width="6.4" height="6.4" viewBox="0 0 6.4 6.4"><circle cx="3.200" cy="3.200" r="2.800" fill="#2fb344"/><path d="M1.800 3.200l1 1.100 1.800-2.200" fill="none" stroke="#fff" stroke-width=".8"/></svg>
<div class="t s" style="left:580.70px;top:186px;font-size:4.6px;color:#262626;letter-spacing:-0.143px;">TestService</div>
<div style="left:562.4px;top:245.1px;width:146.6px;height:9.1px;background:#e5e5e5;"></div>
<div class="t s" style="left:618.87px;top:247px;font-size:4.8px;color:#222;letter-spacing:-0.182px;">Properties</div>
<svg style="left:696.7px;top:246.85px;" width="11" height="6" viewBox="0 0 11 6"><rect x="1.700" y=".7" width="2.400" height="2.700" rx=".4" fill="#2b2b2b"/><rect x=".7" y="2.100" width="2.400" height="2.600" rx=".4" fill="#fff" stroke="#2b2b2b" stroke-width=".9"/><path d="M7.300 1.300l2.900 3.100m0-3.100l-2.900 3.100" stroke="#111" stroke-width=".85"/></svg>
<div style="left:562.4px;top:254.2px;width:146.6px;height:10px;background:#fff;"></div>
<div style="left:562.4px;top:262px;width:146.6px;height:0.8px;background:#e2e2e2;"></div>
<div class="t s" style="left:564.00px;top:254px;font-size:4.5px;color:#a0a0a0;letter-spacing:-0.012px;">Filter Properties (Ctrl+Shift+P)</div>
<svg style="left:703.5px;top:256.2px;" width="5" height="5" viewBox="0 0 5 5"><path d="M1.500 1.500h2l-1 1.200z" fill="#222"/></svg>
<div style="left:562px;top:263.6px;width:147px;height:156.4px;background:#fff;border:.7px solid #dbdbdb;border-right:none;"></div>
<div style="left:112px;top:61.2px;width:448px;height:9.3px;background:#f0f0f0;border-bottom:1px solid #dadada;"></div>
<div style="left:112px;top:61.7px;width:45px;height:8.8px;background:#fff;border-right:1px solid #cccccc;border-top:.5px solid #e0e0e0;"></div>
<svg style="left:115.5px;top:63.3px;" width="8" height="6" viewBox="0 0 8 6"><path d="M2 4.800a1.300 1.300 0 0 1 .2-2.600 2 2 0 0 1 3.800-.2 1.400 1.400 0 0 1 .2 2.800z" fill="#fff" stroke="#888" stroke-width=".5"/></svg>
<div class="t" style="left:124.50px;top:63px;font-size:4.8px;color:#1a1a1a;letter-spacing:-0.194px;">Baseplate</div>
<svg style="left:146.7px;top:64.3px;" width="4" height="4" viewBox="0 0 4 4"><path d="M.8.800l2.400 2.400m0-2.400l-2.400 2.400" stroke="#666" stroke-width=".5"/></svg>
<svg style="left:550.5px;top:62px;" width="8" height="8" viewBox="0 0 8 8"><rect x="1.700" y="1.300" width="4.800" height="5.400" fill="#fafafa" stroke="#ababab" stroke-width=".6"/><path d="M1.700 3.200h-.9v3.500h2.600" fill="none" stroke="#ababab" stroke-width=".5"/></svg>
<svg style="left:112px;top:70px" width="448" height="350" viewBox="112 70 448 350"><defs><linearGradient id="sky" x1="0" y1="70.5" x2="0" y2="126.0" gradientUnits="userSpaceOnUse"><stop offset="0" stop-color="#98c8e1"/><stop offset=".26" stop-color="#a4cde2"/><stop offset=".53" stop-color="#afd1e2"/><stop offset=".71" stop-color="#b6d3e1"/><stop offset=".856" stop-color="#bcd5e0"/><stop offset=".946" stop-color="#c4d9e2"/><stop offset="1" stop-color="#cadce4"/></linearGradient><linearGradient id="fog" x1="0" y1="126.0" x2="0" y2="419.4" gradientUnits="userSpaceOnUse"><stop offset="0.000" stop-color="#98a9c1" stop-opacity="0.97"/><stop offset="0.007" stop-color="#93a5bd" stop-opacity="0.9"/><stop offset="0.020" stop-color="#8ea0b8" stop-opacity="0.72"/><stop offset="0.048" stop-color="#8d9eb3" stop-opacity="0.56"/><stop offset="0.099" stop-color="#8d9eb3" stop-opacity="0.5"/><stop offset="0.150" stop-color="#8d9eb3" stop-opacity="0.43"/><stop offset="0.286" stop-color="#8d9eb3" stop-opacity="0.3"/><stop offset="0.423" stop-color="#8d9eb3" stop-opacity="0.22"/><stop offset="0.559" stop-color="#8d9eb3" stop-opacity="0.13"/><stop offset="0.798" stop-color="#8d9eb3" stop-opacity="0.03"/><stop offset="1.000" stop-color="#8d9eb3" stop-opacity="0"/></linearGradient><linearGradient id="gt" x1="0" y1="126.0" x2="0" y2="419.4" gradientUnits="userSpaceOnUse"><stop offset="0.000" stop-color="#fff" stop-opacity="0"/><stop offset="0.055" stop-color="#fff" stop-opacity="0"/><stop offset="0.082" stop-color="#fff" stop-opacity="0.25"/><stop offset="0.123" stop-color="#fff" stop-opacity="0.45"/><stop offset="0.201" stop-color="#fff" stop-opacity="0.6"/><stop offset="0.303" stop-color="#fff" stop-opacity="0.72"/><stop offset="0.457" stop-color="#fff" stop-opacity="0.85"/><stop offset="0.661" stop-color="#fff" stop-opacity="1"/><stop offset="1.000" stop-color="#fff" stop-opacity="1"/></linearGradient><linearGradient id="gl" x1="0" y1="126.0" x2="0" y2="419.4" gradientUnits="userSpaceOnUse"><stop offset="0.000" stop-color="#fff" stop-opacity="0"/><stop offset="0.201" stop-color="#fff" stop-opacity="0"/><stop offset="0.293" stop-color="#fff" stop-opacity="0.3"/><stop offset="0.389" stop-color="#fff" stop-opacity="0.6"/><stop offset="0.525" stop-color="#fff" stop-opacity="0.85"/><stop offset="0.729" stop-color="#fff" stop-opacity="1"/><stop offset="1.000" stop-color="#fff" stop-opacity="1"/></linearGradient><mask id="mt" maskUnits="userSpaceOnUse" x="112" y="70" width="448" height="350"><rect x="112" y="70" width="448" height="350" fill="url(#gt)"/></mask><mask id="ml" maskUnits="userSpaceOnUse" x="112" y="70" width="448" height="350"><rect x="112" y="70" width="448" height="350" fill="url(#gl)"/></mask><clipPath id="vc"><rect x="112.0" y="70.5" width="448.0" height="348.9"/></clipPath></defs><g clip-path="url(#vc)"><rect x="112" y="70" width="448" height="58.0" fill="url(#sky)"/><polygon points="112,127.7 340.6,125.5 560,128 560,420 112,420" fill="#6c7388"/><g mask="url(#mt)"><path fill="#7a8095" d="M73.9 584.7L197.7 481.4L172.9 413.0L72.4 477.3zM71.4 410.3L156.0 366.5L143.8 332.8L70.7 364.6zM70.3 331.4L134.5 307.3L127.3 287.2L69.9 306.2zM69.6 286.4L121.4 271.1L116.6 257.8L69.4 270.4zM69.2 257.2L112.6 246.7L109.2 237.3L69.0 246.2zM237.7 591.6L325.9 485.6L276.3 415.8L197.7 481.4zM172.9 413.0L242.6 368.4L218.3 334.2L156.0 366.5zM143.8 332.8L199.9 308.4L185.5 288.1L134.5 307.3zM127.3 287.2L173.9 271.8L164.4 258.4L121.4 271.1zM116.6 257.8L156.5 247.2L149.7 237.7L112.6 246.7zM109.2 237.3L143.9 229.6L138.9 222.5L106.2 229.2zM103.7 222.2L134.4 216.3L130.5 210.8L101.4 216.0zM99.4 210.5L127.1 205.9L123.9 201.5L97.7 205.7zM96.1 201.3L121.1 197.6L118.6 194.0L94.7 197.4zM93.4 193.8L116.3 190.8L114.2 187.8L92.2 190.6zM91.1 187.6L112.2 185.1L110.5 182.5L90.2 184.9zM406.4 598.8L457.1 489.9L381.6 418.6L325.9 485.6zM276.3 415.8L330.6 370.4L293.8 335.7L242.6 368.4zM218.3 334.2L266.1 309.5L244.4 289.0L199.9 308.4zM185.5 288.1L226.9 272.5L212.6 259.0L173.9 271.8zM164.4 258.4L200.7 247.8L190.6 238.2L156.5 247.2zM149.7 237.7L181.8 230.0L174.3 222.8L143.9 229.6zM138.9 222.5L167.7 216.6L161.8 211.1L134.4 216.3zM130.5 210.8L156.6 206.1L151.9 201.7L127.1 205.9zM123.9 201.5L147.7 197.8L143.9 194.2L121.1 197.6zM118.6 194.0L140.5 190.9L137.3 187.9L116.3 190.8zM114.2 187.8L134.4 185.2L131.7 182.7L112.2 185.1zM110.5 182.5L129.3 180.3L127.0 178.2L108.8 180.2zM107.3 178.1L124.9 176.2L122.9 174.3L105.9 176.1zM104.5 174.2L121.1 172.6L119.3 170.9L103.3 172.5zM102.1 170.9L117.7 169.4L116.2 168.0L101.1 169.3zM100.0 167.9L114.8 166.6L113.4 165.3L99.1 166.6zM98.2 165.3L112.1 164.1L110.9 163.0L97.3 164.1zM381.6 418.6L420.0 372.4L370.4 337.2L330.6 370.4zM293.8 335.7L333.1 310.6L303.9 289.9L266.1 309.5zM244.4 289.0L280.5 273.3L261.3 259.6L226.9 272.5zM212.6 259.0L245.3 248.3L231.7 238.6L200.7 247.8zM190.6 238.2L220.1 230.3L209.9 223.2L181.8 230.0zM174.3 222.8L201.1 216.9L193.3 211.3L167.7 216.6zM161.8 211.1L186.3 206.4L180.1 201.9L156.6 206.1zM151.9 201.7L174.5 198.0L169.4 194.3L147.7 197.8zM143.9 194.2L164.8 191.1L160.6 188.1L140.5 190.9zM137.3 187.9L156.7 185.3L153.1 182.8L134.4 185.2zM131.7 182.7L149.8 180.4L146.8 178.3L129.3 180.3zM127.0 178.2L144.0 176.3L141.3 174.4L124.9 176.2zM122.9 174.3L138.9 172.7L136.6 171.0L121.1 172.6zM119.3 170.9L134.4 169.5L132.4 168.0L117.7 169.4zM116.2 168.0L130.5 166.7L128.7 165.4L114.8 166.6zM113.4 165.3L127.0 164.2L125.4 163.1L112.1 164.1zM110.9 163.0L123.8 162.0L122.4 160.9L109.8 161.9zM108.7 160.9L121.0 160.0L119.7 159.0L107.7 159.9zM106.7 159.0L118.5 158.2L117.3 157.3L105.7 158.1zM104.8 157.3L116.1 156.5L115.1 155.7L104.0 156.5zM103.2 155.7L114.0 155.0L113.0 154.3L102.4 155.0zM101.7 154.3L112.1 153.6L111.2 153.0L100.9 153.6zM489.0 421.4L510.9 374.4L448.1 338.7L420.0 372.4zM370.4 337.2L400.8 311.8L364.0 290.8L333.1 310.6zM303.9 289.9L334.6 274.0L310.4 260.3L280.5 273.3zM261.3 259.6L290.2 248.8L273.2 239.1L245.3 248.3zM231.7 238.6L258.5 230.7L245.8 223.5L220.1 230.3zM209.9 223.2L234.7 217.2L224.9 211.6L201.1 216.9zM193.3 211.3L216.2 206.6L208.4 202.1L186.3 206.4zM180.1 201.9L201.3 198.1L195.0 194.5L174.5 198.0zM169.4 194.3L189.2 191.2L183.9 188.2L164.8 191.1zM160.6 188.1L179.0 185.4L174.6 182.9L156.7 185.3zM153.1 182.8L170.5 180.6L166.7 178.4L149.8 180.4zM146.8 178.3L163.1 176.4L159.8 174.5L144.0 176.3zM141.3 174.4L156.7 172.7L153.9 171.1L138.9 172.7zM136.6 171.0L151.1 169.6L148.6 168.1L134.4 169.5zM132.4 168.0L146.2 166.8L144.0 165.5L130.5 166.7zM128.7 165.4L141.8 164.3L139.8 163.1L127.0 164.2zM125.4 163.1L137.9 162.0L136.1 161.0L123.8 162.0zM122.4 160.9L134.4 160.0L132.8 159.1L121.0 160.0zM119.7 159.0L131.2 158.2L129.7 157.4L118.5 158.2zM117.3 157.3L128.3 156.5L126.9 155.8L116.1 156.5zM115.1 155.7L125.6 155.0L124.4 154.3L114.0 155.0zM113.0 154.3L123.2 153.6L122.1 153.0L112.1 153.6zM111.2 153.0L121.0 152.4L119.9 151.8L110.3 152.3zM109.4 151.7L118.9 151.2L117.9 150.6L108.6 151.2zM107.9 150.6L117.0 150.1L116.1 149.6L107.1 150.1zM106.4 149.6L115.2 149.1L114.4 148.6L105.7 149.1zM105.0 148.6L113.6 148.2L112.8 147.7L104.4 148.1zM103.7 147.7L112.0 147.3L111.3 146.9L103.1 147.3zM598.5 424.3L603.2 376.5L526.8 340.2L510.9 374.4zM448.1 338.7L469.5 312.9L424.9 291.7L400.8 311.8zM364.0 290.8L389.2 274.8L359.9 260.9L334.6 274.0zM310.4 260.3L335.6 249.3L315.0 239.5L290.2 248.8zM273.2 239.1L297.3 231.1L282.0 223.8L258.5 230.7zM245.8 223.5L268.6 217.4L256.7 211.8L234.7 217.2zM224.9 211.6L246.2 206.8L236.8 202.4L216.2 206.6zM208.4 202.1L228.3 198.3L220.7 194.7L201.3 198.1zM195.0 194.5L213.7 191.4L207.3 188.3L189.2 191.2zM183.9 188.2L201.5 185.6L196.1 183.0L179.0 185.4zM174.6 182.9L191.2 180.7L186.6 178.5L170.5 180.6zM166.7 178.4L182.3 176.5L178.4 174.6L163.1 176.4zM159.8 174.5L174.7 172.8L171.2 171.2L156.7 172.7zM153.9 171.1L167.9 169.6L164.9 168.2L151.1 169.6zM148.6 168.1L162.0 166.8L159.3 165.5L146.2 166.8zM144.0 165.5L156.8 164.3L154.3 163.2L141.8 164.3zM139.8 163.1L152.1 162.1L149.9 161.0L137.9 162.0zM136.1 161.0L147.8 160.1L145.9 159.1L134.4 160.0zM132.8 159.1L144.0 158.2L142.2 157.4L131.2 158.2zM129.7 157.4L140.5 156.6L138.9 155.8L128.3 156.5zM126.9 155.8L137.3 155.1L135.8 154.4L125.6 155.0zM124.4 154.3L134.4 153.7L133.0 153.0L123.2 153.6zM122.1 153.0L131.7 152.4L130.4 151.8L121.0 152.4zM119.9 151.8L129.2 151.2L128.1 150.7L118.9 151.2zM117.9 150.6L126.9 150.1L125.8 149.6L117.0 150.1zM116.1 149.6L124.8 149.1L123.8 148.6L115.2 149.1zM114.4 148.6L122.8 148.2L121.9 147.7L113.6 148.2zM112.8 147.7L121.0 147.3L120.1 146.9L112.0 147.3zM111.3 146.9L119.2 146.5L118.4 146.1L110.6 146.5zM109.9 146.1L117.6 145.7L116.8 145.3L109.2 145.7zM108.6 145.3L116.1 145.0L115.4 144.6L108.0 145.0zM107.4 144.6L114.6 144.3L114.0 144.0L106.8 144.3zM526.8 340.2L538.9 314.1L486.3 292.7L469.5 312.9zM424.9 291.7L444.3 275.5L409.9 261.5L389.2 274.8zM359.9 260.9L381.3 249.8L357.0 239.9L335.6 249.3zM315.0 239.5L336.3 231.5L318.3 224.2L297.3 231.1zM282.0 223.8L302.6 217.7L288.7 212.1L268.6 217.4zM256.7 211.8L276.4 207.1L265.4 202.6L246.2 206.8zM236.8 202.4L255.4 198.5L246.5 194.9L228.3 198.3zM220.7 194.7L238.3 191.5L230.9 188.5L213.7 191.4zM207.3 188.3L224.0 185.7L217.8 183.1L201.5 185.6zM196.1 183.0L212.0 180.8L206.6 178.6L191.2 180.7zM186.6 178.5L201.6 176.6L197.0 174.7L182.3 176.5zM178.4 174.6L192.6 172.9L188.6 171.3L174.7 172.8zM171.2 171.2L184.8 169.7L181.2 168.3L167.9 169.6zM164.9 168.2L177.9 166.9L174.7 165.6L162.0 166.8zM159.3 165.5L171.7 164.4L168.9 163.2L156.8 164.3zM154.3 163.2L166.2 162.1L163.7 161.1L152.1 162.1zM149.9 161.0L161.3 160.1L159.0 159.2L147.8 160.1zM145.9 159.1L156.8 158.3L154.7 157.4L144.0 158.2zM142.2 157.4L152.7 156.6L150.8 155.8L140.5 156.6zM138.9 155.8L149.0 155.1L147.3 154.4L137.3 155.1zM135.8 154.4L145.6 153.7L144.0 153.1L134.4 153.7zM133.0 153.0L142.4 152.4L141.0 151.8L131.7 152.4zM130.4 151.8L139.6 151.3L138.2 150.7L129.2 151.2zM128.1 150.7L136.9 150.2L135.6 149.6L126.9 150.1zM125.8 149.6L134.4 149.1L133.2 148.7L124.8 149.1zM123.8 148.6L132.1 148.2L131.0 147.8L122.8 148.2zM121.9 147.7L129.9 147.3L128.9 146.9L121.0 147.3zM120.1 146.9L127.9 146.5L126.9 146.1L119.2 146.5zM118.4 146.1L126.0 145.7L125.1 145.4L117.6 145.7zM116.8 145.3L124.2 145.0L123.4 144.7L116.1 145.0zM115.4 144.6L122.5 144.3L121.7 144.0L114.6 144.3zM606.7 341.7L609.3 315.3L548.5 293.6L538.9 314.1zM486.3 292.7L500.0 276.3L460.3 262.1L444.3 275.5zM409.9 261.5L427.3 250.4L399.5 240.4L381.3 249.8zM357.0 239.9L375.6 231.9L354.9 224.5L336.3 231.5zM318.3 224.2L336.8 218.0L320.9 212.3L302.6 217.7zM288.7 212.1L306.8 207.3L294.1 202.8L276.4 207.1zM265.4 202.6L282.7 198.7L272.4 195.0L255.4 198.5zM246.5 194.9L263.0 191.7L254.5 188.6L238.3 191.5zM230.9 188.5L246.7 185.8L239.5 183.3L224.0 185.7zM217.8 183.1L232.8 180.9L226.7 178.7L212.0 180.8zM206.6 178.6L221.0 176.7L215.6 174.8L201.6 176.6zM197.0 174.7L210.7 173.0L206.0 171.3L192.6 172.9zM188.6 171.3L201.7 169.8L197.6 168.3L184.8 169.7zM181.2 168.3L193.8 166.9L190.1 165.7L177.9 166.9zM174.7 165.6L186.7 164.4L183.5 163.3L171.7 164.4zM168.9 163.2L180.4 162.2L177.5 161.1L166.2 162.1zM163.7 161.1L174.8 160.2L172.1 159.2L161.3 160.1zM159.0 159.2L169.6 158.3L167.2 157.5L156.8 158.3zM154.7 157.4L165.0 156.7L162.8 155.9L152.7 156.6zM150.8 155.8L160.7 155.1L158.7 154.4L149.0 155.1zM147.3 154.4L156.8 153.7L155.0 153.1L145.6 153.7zM144.0 153.1L153.2 152.5L151.5 151.9L142.4 152.4zM141.0 151.8L149.9 151.3L148.3 150.7L139.6 151.3zM138.2 150.7L146.8 150.2L145.4 149.7L136.9 150.2zM135.6 149.6L144.0 149.2L142.6 148.7L134.4 149.1zM133.2 148.7L141.3 148.2L140.1 147.8L132.1 148.2zM131.0 147.8L138.9 147.3L137.7 146.9L129.9 147.3zM128.9 146.9L136.6 146.5L135.5 146.1L127.9 146.5zM126.9 146.1L134.4 145.7L133.4 145.4L126.0 145.7zM125.1 145.4L132.3 145.0L131.4 144.7L124.2 145.0zM123.4 144.7L130.4 144.3L129.5 144.0L122.5 144.3zM548.5 293.6L556.2 277.1L511.2 262.8L500.0 276.3zM460.3 262.1L473.8 250.9L442.2 240.9L427.3 250.4zM399.5 240.4L415.2 232.3L391.8 224.8L375.6 231.9zM354.9 224.5L371.3 218.3L353.3 212.6L336.8 218.0zM320.9 212.3L337.3 207.5L323.0 203.0L306.8 207.3zM294.1 202.8L310.1 198.9L298.5 195.2L282.7 198.7zM272.4 195.0L287.9 191.8L278.2 188.8L263.0 191.7zM254.5 188.6L269.4 186.0L261.3 183.4L246.7 185.8zM239.5 183.3L253.8 181.0L246.8 178.8L232.8 180.9zM226.7 178.7L240.4 176.8L234.4 174.8L221.0 176.7zM215.6 174.8L228.8 173.1L223.6 171.4L210.7 173.0zM206.0 171.3L218.7 169.9L214.0 168.4L201.7 169.8zM197.6 168.3L209.7 167.0L205.6 165.7L193.8 166.9zM190.1 165.7L201.8 164.5L198.1 163.3L186.7 164.4zM183.5 163.3L194.7 162.2L191.4 161.2L180.4 162.2zM177.5 161.1L188.3 160.2L185.3 159.3L174.8 160.2zM172.1 159.2L182.5 158.4L179.8 157.5L169.6 158.3zM167.2 157.5L177.2 156.7L174.8 155.9L165.0 156.7zM162.8 155.9L172.4 155.2L170.2 154.5L160.7 155.1zM158.7 154.4L168.0 153.8L166.0 153.1L156.8 153.7zM155.0 153.1L164.0 152.5L162.1 151.9L153.2 152.5zM151.5 151.9L160.3 151.3L158.5 150.8L149.9 151.3zM148.3 150.7L156.8 150.2L155.2 149.7L146.8 150.2zM145.4 149.7L153.6 149.2L152.1 148.7L144.0 149.2zM142.6 148.7L150.6 148.2L149.2 147.8L141.3 148.2zM140.1 147.8L147.8 147.4L146.5 146.9L138.9 147.3zM137.7 146.9L145.2 146.5L144.0 146.1L136.6 146.5zM135.5 146.1L142.8 145.8L141.6 145.4L134.4 145.7zM133.4 145.4L140.5 145.0L139.4 144.7L132.3 145.0zM131.4 144.7L138.3 144.3L137.3 144.0L130.4 144.3zM129.5 144.0L136.3 143.7L135.3 143.4L128.6 143.7zM611.3 294.6L613.0 277.8L562.6 263.4L556.2 277.1zM511.2 262.8L520.6 251.4L485.3 241.3L473.8 250.9zM442.2 240.9L455.0 232.7L428.9 225.2L415.2 232.3zM391.8 224.8L406.0 218.6L385.9 212.9L371.3 218.3zM353.3 212.6L368.0 207.8L352.0 203.2L337.3 207.5zM323.0 203.0L337.6 199.1L324.6 195.4L310.1 198.9zM298.5 195.2L312.8 192.0L302.1 188.9L287.9 191.8zM278.2 188.8L292.2 186.1L283.2 183.5L269.4 186.0zM261.3 183.4L274.8 181.1L267.1 178.9L253.8 181.0zM246.8 178.8L259.9 176.9L253.2 174.9L240.4 176.8zM234.4 174.8L247.0 173.2L241.1 171.5L228.8 173.1zM223.6 171.4L235.7 169.9L230.5 168.5L218.7 169.9zM214.0 168.4L225.7 167.1L221.1 165.8L209.7 167.0zM205.6 165.7L216.8 164.5L212.8 163.4L201.8 164.5zM198.1 163.3L208.9 162.3L205.3 161.2L194.7 162.2zM191.4 161.2L201.8 160.3L198.5 159.3L188.3 160.2zM185.3 159.3L195.4 158.4L192.4 157.6L182.5 158.4zM179.8 157.5L189.5 156.7L186.8 156.0L177.2 156.7zM174.8 155.9L184.2 155.2L181.7 154.5L172.4 155.2zM170.2 154.5L179.3 153.8L177.0 153.2L168.0 153.8zM166.0 153.1L174.8 152.5L172.7 151.9L164.0 152.5zM162.1 151.9L170.7 151.3L168.7 150.8L160.3 151.3zM158.5 150.8L166.8 150.2L165.0 149.7L156.8 150.2zM155.2 149.7L163.2 149.2L161.6 148.7L153.6 149.2zM152.1 148.7L159.9 148.3L158.3 147.8L150.6 148.2zM149.2 147.8L156.8 147.4L155.4 147.0L147.8 147.4zM146.5 146.9L153.9 146.6L152.5 146.2L145.2 146.5zM144.0 146.1L151.2 145.8L149.9 145.4L142.8 145.8zM141.6 145.4L148.7 145.0L147.4 144.7L140.5 145.0zM139.4 144.7L146.3 144.4L145.1 144.0L138.3 144.3zM137.3 144.0L144.0 143.7L142.9 143.4L136.3 143.7zM562.6 263.4L567.9 252.0L528.7 241.8L520.6 251.4zM485.3 241.3L495.2 233.1L466.2 225.5L455.0 232.7zM428.9 225.2L440.9 218.9L418.6 213.1L406.0 218.6zM385.9 212.9L398.8 208.0L381.2 203.4L368.0 207.8zM352.0 203.2L365.3 199.3L350.9 195.5L337.6 199.1zM324.6 195.4L337.9 192.2L326.0 189.1L312.8 192.0zM302.1 188.9L315.1 186.2L305.1 183.6L292.2 186.1zM283.2 183.5L295.9 181.2L287.4 179.0L274.8 181.1zM267.1 178.9L279.4 176.9L272.1 175.0L259.9 176.9zM253.2 174.9L265.2 173.2L258.7 171.6L247.0 173.2zM241.1 171.5L252.7 170.0L247.1 168.5L235.7 169.9zM230.5 168.5L241.7 167.1L236.7 165.8L225.7 167.1zM221.1 165.8L232.0 164.6L227.5 163.4L216.8 164.5zM212.8 163.4L223.3 162.3L219.2 161.3L208.9 162.3zM205.3 161.2L215.4 160.3L211.8 159.4L201.8 160.3zM198.5 159.3L208.3 158.5L205.0 157.6L195.4 158.4zM192.4 157.6L201.9 156.8L198.9 156.0L189.5 156.7zM186.8 156.0L196.0 155.2L193.2 154.5L184.2 155.2zM181.7 154.5L190.6 153.8L188.1 153.2L179.3 153.8zM177.0 153.2L185.6 152.6L183.3 152.0L174.8 152.5zM172.7 151.9L181.1 151.4L178.9 150.8L170.7 151.3zM168.7 150.8L176.8 150.3L174.8 149.7L166.8 150.2zM165.0 149.7L172.9 149.2L171.0 148.8L163.2 149.2zM161.6 148.7L169.2 148.3L167.5 147.8L159.9 148.3zM158.3 147.8L165.8 147.4L164.2 147.0L156.8 147.4zM155.4 147.0L162.6 146.6L161.1 146.2L153.9 146.6zM152.5 146.2L159.6 145.8L158.2 145.4L151.2 145.8zM149.9 145.4L156.8 145.1L155.5 144.7L148.7 145.0zM147.4 144.7L154.2 144.4L152.9 144.1L146.3 144.4zM145.1 144.0L151.7 143.7L150.5 143.4L144.0 143.7zM528.7 241.8L535.6 233.5L503.8 225.9L495.2 233.1zM466.2 225.5L476.0 219.2L451.6 213.4L440.9 218.9zM418.6 213.1L429.9 208.2L410.5 203.6L398.8 208.0zM381.2 203.4L393.1 199.5L377.4 195.7L365.3 199.3zM350.9 195.5L363.1 192.3L350.1 189.2L337.9 192.2zM326.0 189.1L338.1 186.4L327.2 183.8L315.1 186.2zM305.1 183.6L317.1 181.3L307.7 179.1L295.9 181.2zM287.4 179.0L299.1 177.0L291.0 175.1L279.4 176.9zM272.1 175.0L283.5 173.3L276.4 171.6L265.2 173.2zM258.7 171.6L269.8 170.1L263.6 168.6L252.7 170.0zM247.1 168.5L257.8 167.2L252.3 165.9L241.7 167.1zM236.7 165.8L247.1 164.7L242.2 163.5L232.0 164.6zM227.5 163.4L237.6 162.4L233.2 161.3L223.3 162.3zM219.2 161.3L229.0 160.3L225.1 159.4L215.4 160.3zM211.8 159.4L221.3 158.5L217.7 157.6L208.3 158.5zM205.0 157.6L214.2 156.8L210.9 156.0L201.9 156.8zM198.9 156.0L207.8 155.3L204.8 154.6L196.0 155.2zM193.2 154.5L201.9 153.9L199.1 153.2L190.6 153.8zM188.1 153.2L196.5 152.6L193.9 152.0L185.6 152.6zM183.3 152.0L191.5 151.4L189.1 150.8L181.1 151.4zM178.9 150.8L186.9 150.3L184.7 149.8L176.8 150.3zM174.8 149.7L182.6 149.3L180.5 148.8L172.9 149.2zM171.0 148.8L178.6 148.3L176.7 147.9L169.2 148.3zM167.5 147.8L174.8 147.4L173.1 147.0L165.8 147.4zM164.2 147.0L171.4 146.6L169.7 146.2L162.6 146.6zM161.1 146.2L168.1 145.8L166.5 145.4L159.6 145.8zM158.2 145.4L165.0 145.1L163.6 144.7L156.8 145.1zM155.5 144.7L162.1 144.4L160.8 144.1L154.2 144.4zM152.9 144.1L159.4 143.7L158.1 143.4L151.7 143.7zM572.4 242.2L576.3 233.9L541.6 226.2L535.6 233.5zM503.8 225.9L511.3 219.5L484.7 213.7L476.0 219.2zM451.6 213.4L461.1 208.5L440.0 203.8L429.9 208.2zM410.5 203.6L421.0 199.7L403.9 195.9L393.1 199.5zM377.4 195.7L388.4 192.5L374.2 189.4L363.1 192.3zM350.1 189.2L361.3 186.5L349.3 183.9L338.1 186.4zM327.2 183.8L338.3 181.5L328.2 179.2L317.1 181.3zM307.7 179.1L318.8 177.1L310.0 175.2L299.1 177.0zM291.0 175.1L301.8 173.4L294.2 171.7L283.5 173.3zM276.4 171.6L287.0 170.2L280.3 168.7L269.8 170.1zM263.6 168.6L273.9 167.3L268.0 166.0L257.8 167.2zM252.3 165.9L262.3 164.7L257.0 163.6L247.1 164.7zM242.2 163.5L252.0 162.4L247.2 161.4L237.6 162.4zM233.2 161.3L242.7 160.4L238.4 159.4L229.0 160.3zM225.1 159.4L234.3 158.5L230.3 157.7L221.3 158.5zM217.7 157.6L226.6 156.9L223.0 156.1L214.2 156.8zM210.9 156.0L219.6 155.3L216.4 154.6L207.8 155.3zM204.8 154.6L213.2 153.9L210.2 153.3L201.9 153.9zM199.1 153.2L207.4 152.6L204.6 152.0L196.5 152.6zM193.9 152.0L201.9 151.4L199.4 150.9L191.5 151.4zM189.1 150.8L196.9 150.3L194.5 149.8L186.9 150.3zM184.7 149.8L192.3 149.3L190.1 148.8L182.6 149.3zM180.5 148.8L187.9 148.3L185.9 147.9L178.6 148.3zM176.7 147.9L183.9 147.4L182.0 147.0L174.8 147.4zM173.1 147.0L180.1 146.6L178.3 146.2L171.4 146.6zM169.7 146.2L176.6 145.8L174.9 145.5L168.1 145.8zM166.5 145.4L173.2 145.1L171.6 144.8L165.0 145.1zM163.6 144.7L170.1 144.4L168.6 144.1L162.1 144.4zM160.8 144.1L167.1 143.8L165.7 143.5L159.4 143.7zM541.6 226.2L546.9 219.9L518.0 214.0L511.3 219.5zM484.7 213.7L492.5 208.7L469.6 204.1L461.1 208.5zM440.0 203.8L449.1 199.9L430.6 196.1L421.0 199.7zM403.9 195.9L413.8 192.6L398.5 189.5L388.4 192.5zM374.2 189.4L384.5 186.6L371.6 184.0L361.3 186.5zM349.3 183.9L359.7 181.6L348.7 179.3L338.3 181.5zM328.2 179.2L338.5 177.2L329.0 175.3L318.8 177.1zM310.0 175.2L320.2 173.5L311.9 171.8L301.8 173.4zM294.2 171.7L304.2 170.2L296.9 168.7L287.0 170.2zM280.3 168.7L290.1 167.3L283.7 166.0L273.9 167.3zM268.0 166.0L277.6 164.8L271.9 163.6L262.3 164.7zM257.0 163.6L266.4 162.5L261.3 161.4L252.0 162.4zM247.2 161.4L256.4 160.4L251.7 159.5L242.7 160.4zM238.4 159.4L247.3 158.6L243.1 157.7L234.3 158.5zM230.3 157.7L239.0 156.9L235.2 156.1L226.6 156.9zM223.0 156.1L231.5 155.4L228.0 154.6L219.6 155.3zM216.4 154.6L224.6 153.9L221.4 153.3L213.2 153.9zM210.2 153.3L218.3 152.6L215.3 152.0L207.4 152.6zM204.6 152.0L212.4 151.5L209.6 150.9L201.9 151.4zM199.4 150.9L207.0 150.3L204.4 149.8L196.9 150.3zM194.5 149.8L202.0 149.3L199.6 148.8L192.3 149.3zM190.1 148.8L197.3 148.4L195.1 147.9L187.9 148.3zM185.9 147.9L192.9 147.5L190.9 147.0L183.9 147.4zM182.0 147.0L188.8 146.6L186.9 146.2L180.1 146.6zM178.3 146.2L185.0 145.9L183.2 145.5L176.6 145.8zM174.9 145.5L181.4 145.1L179.7 144.8L173.2 145.1zM171.6 144.8L178.1 144.4L176.4 144.1L170.1 144.4zM168.6 144.1L174.9 143.8L173.3 143.5L167.1 143.8zM579.7 226.6L582.7 220.2L551.6 214.2L546.9 219.9zM518.0 214.0L524.0 209.0L499.4 204.3L492.5 208.7zM469.6 204.1L477.3 200.1L457.4 196.3L449.1 199.9zM430.6 196.1L439.3 192.8L422.8 189.7L413.8 192.6zM398.5 189.5L407.8 186.8L393.9 184.1L384.5 186.6zM371.6 184.0L381.1 181.7L369.3 179.4L359.7 181.6zM348.7 179.3L358.4 177.3L348.2 175.4L338.5 177.2zM329.0 175.3L338.7 173.6L329.8 171.9L320.2 173.5zM311.9 171.8L321.5 170.3L313.7 168.8L304.2 170.2zM296.9 168.7L306.3 167.4L299.4 166.1L290.1 167.3zM283.7 166.0L292.9 164.8L286.7 163.7L277.6 164.8zM271.9 163.6L280.9 162.6L275.3 161.5L266.4 162.5zM261.3 161.4L270.1 160.5L265.1 159.5L256.4 160.4zM251.7 159.5L260.3 158.6L255.8 157.8L247.3 158.6zM243.1 157.7L251.5 156.9L247.3 156.1L239.0 156.9zM235.2 156.1L243.4 155.4L239.6 154.7L231.5 155.4zM228.0 154.6L236.0 154.0L232.5 153.3L224.6 153.9zM221.4 153.3L229.2 152.7L226.0 152.1L218.3 152.6zM215.3 152.0L222.9 151.5L219.9 150.9L212.4 151.5zM209.6 150.9L217.1 150.4L214.3 149.8L207.0 150.3zM204.4 149.8L211.7 149.3L209.1 148.9L202.0 149.3zM199.6 148.8L206.7 148.4L204.3 147.9L197.3 148.4zM195.1 147.9L202.0 147.5L199.8 147.1L192.9 147.5zM190.9 147.0L197.6 146.7L195.5 146.3L188.8 146.6zM186.9 146.2L193.5 145.9L191.6 145.5L185.0 145.9zM183.2 145.5L189.7 145.1L187.8 144.8L181.4 145.1zM179.7 144.8L186.0 144.4L184.3 144.1L178.1 144.4zM176.4 144.1L182.6 143.8L181.0 143.5L174.9 143.8zM551.6 214.2L555.8 209.2L529.4 204.5L524.0 209.0zM499.4 204.3L505.7 200.3L484.3 196.4L477.3 200.1zM457.4 196.3L465.0 193.0L447.3 189.8L439.3 192.8zM422.8 189.7L431.2 186.9L416.3 184.3L407.8 186.8zM393.9 184.1L402.6 181.8L390.0 179.5L381.1 181.7zM369.3 179.4L378.3 177.4L367.4 175.5L358.4 177.3zM348.2 175.4L357.2 173.7L347.7 172.0L338.7 173.6zM329.8 171.9L338.8 170.4L330.5 168.9L321.5 170.3zM313.7 168.8L322.6 167.5L315.2 166.2L306.3 167.4zM299.4 166.1L308.2 164.9L301.6 163.7L292.9 164.8zM286.7 163.7L295.4 162.6L289.5 161.5L280.9 162.6zM275.3 161.5L283.8 160.5L278.5 159.6L270.1 160.5zM265.1 159.5L273.4 158.7L268.6 157.8L260.3 158.6zM255.8 157.8L263.9 157.0L259.5 156.2L251.5 156.9zM247.3 156.1L255.3 155.4L251.2 154.7L243.4 155.4zM239.6 154.7L247.4 154.0L243.7 153.3L236.0 154.0zM232.5 153.3L240.1 152.7L236.7 152.1L229.2 152.7zM226.0 152.1L233.4 151.5L230.2 150.9L222.9 151.5zM219.9 150.9L227.2 150.4L224.3 149.9L217.1 150.4zM214.3 149.8L221.4 149.4L218.7 148.9L211.7 149.3zM209.1 148.9L216.1 148.4L213.5 148.0L206.7 148.4zM204.3 147.9L211.1 147.5L208.7 147.1L202.0 147.5zM199.8 147.1L206.4 146.7L204.2 146.3L197.6 146.7zM195.5 146.3L202.0 145.9L199.9 145.5L193.5 145.9zM191.6 145.5L197.9 145.2L195.9 144.8L189.7 145.1zM187.8 144.8L194.0 144.5L192.2 144.1L186.0 144.4zM184.3 144.1L190.4 143.8L188.6 143.5L182.6 143.8zM585.3 214.5L587.7 209.5L559.5 204.7L555.8 209.2zM529.4 204.5L534.2 200.5L511.4 196.6L505.7 200.3zM484.3 196.4L490.7 193.1L471.9 189.9L465.0 193.0zM447.3 189.8L454.7 187.0L438.8 184.4L431.2 186.9zM416.3 184.3L424.2 181.9L410.8 179.6L402.6 181.8zM390.0 179.5L398.2 177.5L386.6 175.6L378.3 177.4zM367.4 175.5L375.8 173.8L365.7 172.1L357.2 173.7zM347.7 172.0L356.2 170.5L347.3 169.0L338.8 170.4zM330.5 168.9L338.9 167.5L331.0 166.2L322.6 167.5zM315.2 166.2L323.6 165.0L316.6 163.8L308.2 164.9zM301.6 163.7L309.9 162.7L303.6 161.6L295.4 162.6zM289.5 161.5L297.6 160.6L291.9 159.6L283.8 160.5zM278.5 159.6L286.5 158.7L281.4 157.8L273.4 158.7zM268.6 157.8L276.4 157.0L271.7 156.2L263.9 157.0zM259.5 156.2L267.2 155.5L262.9 154.7L255.3 155.4zM251.2 154.7L258.8 154.0L254.9 153.4L247.4 154.0zM243.7 153.3L251.1 152.7L247.4 152.1L240.1 152.7zM236.7 152.1L243.9 151.5L240.6 151.0L233.4 151.5zM230.2 150.9L237.3 150.4L234.2 149.9L227.2 150.4zM224.3 149.9L231.2 149.4L228.3 148.9L221.4 149.4zM218.7 148.9L225.5 148.4L222.8 148.0L216.1 148.4zM213.5 148.0L220.2 147.5L217.6 147.1L211.1 147.5zM208.7 147.1L215.2 146.7L212.8 146.3L206.4 146.7zM204.2 146.3L210.5 145.9L208.3 145.5L202.0 145.9zM199.9 145.5L206.1 145.2L204.1 144.8L197.9 145.2zM195.9 144.8L202.0 144.5L200.1 144.1L194.0 144.5zM192.2 144.1L198.1 143.8L196.3 143.5L190.4 143.8zM559.5 204.7L562.9 200.7L538.6 196.8L534.2 200.5zM511.4 196.6L516.6 193.3L496.6 190.1L490.7 193.1zM471.9 189.9L478.2 187.2L461.4 184.5L454.7 187.0zM438.8 184.4L445.9 182.0L431.6 179.8L424.2 181.9zM410.8 179.6L418.3 177.6L405.9 175.7L398.2 177.5zM386.6 175.6L394.4 173.8L383.7 172.1L375.8 173.8zM365.7 172.1L373.6 170.5L364.2 169.0L356.2 170.5zM347.3 169.0L355.3 167.6L346.9 166.3L338.9 167.5zM331.0 166.2L339.0 165.0L331.6 163.8L323.6 165.0zM316.6 163.8L324.5 162.7L317.8 161.6L309.9 162.7zM303.6 161.6L311.4 160.6L305.4 159.7L297.6 160.6zM291.9 159.6L299.7 158.8L294.2 157.9L286.5 158.7zM281.4 157.8L289.0 157.1L284.0 156.3L276.4 157.0zM271.7 156.2L279.2 155.5L274.6 154.8L267.2 155.5zM262.9 154.7L270.3 154.1L266.1 153.4L258.8 154.0zM254.9 153.4L262.0 152.8L258.2 152.2L251.1 152.7zM247.4 152.1L254.5 151.6L250.9 151.0L243.9 151.5zM240.6 151.0L247.5 150.5L244.1 149.9L237.3 150.4zM234.2 149.9L241.0 149.4L237.9 148.9L231.2 149.4zM228.3 148.9L234.9 148.5L232.0 148.0L225.5 148.4zM222.8 148.0L229.3 147.6L226.6 147.1L220.2 147.5zM217.6 147.1L224.0 146.7L221.5 146.3L215.2 146.7zM212.8 146.3L219.0 145.9L216.7 145.6L210.5 145.9zM208.3 145.5L214.4 145.2L212.2 144.8L206.1 145.2zM204.1 144.8L210.0 144.5L208.0 144.2L202.0 144.5zM200.1 144.1L205.9 143.8L204.0 143.5L198.1 143.8zM538.6 196.8L542.6 193.5L521.4 190.2L516.6 193.3zM496.6 190.1L501.9 187.3L484.1 184.6L478.2 187.2zM461.4 184.5L467.7 182.2L452.5 179.9L445.9 182.0zM431.6 179.8L438.4 177.7L425.3 175.8L418.3 177.6zM405.9 175.7L413.2 173.9L401.8 172.2L394.4 173.8zM383.7 172.1L391.1 170.6L381.1 169.1L373.6 170.5zM364.2 169.0L371.7 167.7L362.8 166.3L355.3 167.6zM346.9 166.3L354.5 165.1L346.6 163.9L339.0 165.0zM331.6 163.8L339.1 162.8L332.0 161.7L324.5 162.7zM317.8 161.6L325.3 160.7L318.9 159.7L311.4 160.6zM305.4 159.7L312.8 158.8L307.0 157.9L299.7 158.8zM294.2 157.9L301.5 157.1L296.2 156.3L289.0 157.1zM284.0 156.3L291.2 155.5L286.4 154.8L279.2 155.5zM274.6 154.8L281.7 154.1L277.3 153.4L270.3 154.1zM266.1 153.4L273.0 152.8L269.0 152.2L262.0 152.8zM258.2 152.2L265.0 151.6L261.3 151.0L254.5 151.6zM250.9 151.0L257.6 150.5L254.1 149.9L247.5 150.5zM244.1 149.9L250.7 149.4L247.5 148.9L241.0 149.4zM237.9 148.9L244.3 148.5L241.3 148.0L234.9 148.5zM232.0 148.0L238.4 147.6L235.5 147.1L229.3 147.6zM226.6 147.1L232.8 146.7L230.2 146.3L224.0 146.7zM221.5 146.3L227.6 145.9L225.1 145.6L219.0 145.9zM216.7 145.6L222.7 145.2L220.3 144.9L214.4 145.2zM212.2 144.8L218.1 144.5L215.9 144.2L210.0 144.5zM208.0 144.2L213.7 143.9L211.6 143.5L205.9 143.8zM565.9 197.0L568.7 193.6L546.3 190.4L542.6 193.5zM521.4 190.2L525.7 187.5L506.9 184.8L501.9 187.3zM484.1 184.6L489.5 182.3L473.5 180.0L467.7 182.2zM452.5 179.9L458.6 177.8L444.8 175.9L438.4 177.7zM425.3 175.8L431.9 174.0L419.9 172.3L413.2 173.9zM401.8 172.2L408.6 170.7L398.1 169.2L391.1 170.6zM381.1 169.1L388.2 167.7L378.8 166.4L371.7 167.7zM362.8 166.3L370.0 165.1L361.7 164.0L354.5 165.1zM346.6 163.9L353.8 162.8L346.3 161.7L339.1 162.8zM332.0 161.7L339.2 160.7L332.5 159.8L325.3 160.7zM318.9 159.7L326.0 158.8L319.9 158.0L312.8 158.8zM307.0 157.9L314.1 157.1L308.5 156.3L301.5 157.1zM296.2 156.3L303.2 155.6L298.1 154.8L291.2 155.5zM286.4 154.8L293.2 154.1L288.6 153.5L281.7 154.1zM277.3 153.4L284.1 152.8L279.8 152.2L273.0 152.8zM269.0 152.2L275.6 151.6L271.6 151.1L265.0 151.6zM261.3 151.0L267.8 150.5L264.1 150.0L257.6 150.5zM254.1 149.9L260.6 149.5L257.1 149.0L250.7 149.4zM247.5 148.9L253.8 148.5L250.6 148.0L244.3 148.5zM241.3 148.0L247.5 147.6L244.5 147.2L238.4 147.6zM235.5 147.1L241.6 146.8L238.8 146.4L232.8 146.7zM230.2 146.3L236.1 146.0L233.5 145.6L227.6 145.9zM225.1 145.6L231.0 145.2L228.5 144.9L222.7 145.2zM220.3 144.9L226.1 144.5L223.8 144.2L218.1 144.5zM215.9 144.2L221.5 143.9L219.3 143.6L213.7 143.9zM546.3 190.4L549.6 187.6L529.8 184.9L525.7 187.5zM506.9 184.8L511.5 182.4L494.6 180.1L489.5 182.3zM473.5 180.0L478.9 177.9L464.3 176.0L458.6 177.8zM444.8 175.9L450.8 174.1L438.1 172.4L431.9 174.0zM419.9 172.3L426.2 170.8L415.1 169.2L408.6 170.7zM398.1 169.2L404.7 167.8L394.8 166.5L388.2 167.7zM378.8 166.4L385.5 165.2L376.8 164.0L370.0 165.1zM361.7 164.0L368.5 162.9L360.6 161.8L353.8 162.8zM346.3 161.7L353.1 160.8L346.0 159.8L339.2 160.7zM332.5 159.8L339.3 158.9L332.8 158.0L326.0 158.8zM319.9 158.0L326.7 157.2L320.8 156.4L314.1 157.1zM308.5 156.3L315.2 155.6L309.9 154.9L303.2 155.6zM298.1 154.8L304.8 154.2L299.8 153.5L293.2 154.1zM288.6 153.5L295.1 152.9L290.6 152.2L284.1 152.8zM279.8 152.2L286.2 151.7L282.0 151.1L275.6 151.6zM271.6 151.1L278.0 150.5L274.1 150.0L267.8 150.5zM264.1 150.0L270.4 149.5L266.8 149.0L260.6 149.5zM257.1 149.0L263.3 148.5L259.9 148.1L253.8 148.5zM250.6 148.0L256.7 147.6L253.5 147.2L247.5 147.6zM244.5 147.2L250.5 146.8L247.5 146.4L241.6 146.8zM238.8 146.4L244.7 146.0L241.9 145.6L236.1 146.0zM233.5 145.6L239.3 145.2L236.7 144.9L231.0 145.2zM228.5 144.9L234.1 144.5L231.7 144.2L226.1 144.5zM223.8 144.2L229.3 143.9L227.0 143.6L221.5 143.9zM571.3 190.6L573.6 187.7L552.7 185.0L549.6 187.6zM529.8 184.9L533.5 182.5L515.7 180.2L511.5 182.4zM494.6 180.1L499.2 178.0L483.9 176.1L478.9 177.9zM464.3 176.0L469.7 174.2L456.4 172.5L450.8 174.1zM438.1 172.4L443.9 170.8L432.2 169.3L426.2 170.8zM415.1 169.2L421.2 167.9L410.9 166.5L404.7 167.8zM394.8 166.5L401.1 165.3L391.9 164.1L385.5 165.2zM376.8 164.0L383.2 162.9L374.9 161.9L368.5 162.9zM360.6 161.8L367.1 160.8L359.6 159.9L353.1 160.8zM346.0 159.8L352.5 158.9L345.8 158.1L339.3 158.9zM332.8 158.0L339.3 157.2L333.2 156.4L326.7 157.2zM320.8 156.4L327.3 155.6L321.7 154.9L315.2 155.6zM309.9 154.9L316.3 154.2L311.1 153.5L304.8 154.2zM299.8 153.5L306.2 152.9L301.4 152.3L295.1 152.9zM290.6 152.2L296.9 151.7L292.5 151.1L286.2 151.7zM282.0 151.1L288.2 150.6L284.1 150.0L278.0 150.5zM274.1 150.0L280.2 149.5L276.4 149.0L270.4 149.5zM266.8 149.0L272.8 148.5L269.2 148.1L263.3 148.5zM259.9 148.1L265.8 147.6L262.5 147.2L256.7 147.6zM253.5 147.2L259.4 146.8L256.3 146.4L250.5 146.8zM247.5 146.4L253.3 146.0L250.4 145.6L244.7 146.0zM241.9 145.6L247.6 145.3L244.8 144.9L239.3 145.2zM236.7 144.9L242.2 144.6L239.6 144.2L234.1 144.5zM231.7 144.2L237.2 143.9L234.7 143.6L229.3 143.9zM552.7 185.0L555.6 182.6L536.9 180.3L533.5 182.5zM515.7 180.2L519.6 178.1L503.6 176.1L499.2 178.0zM483.9 176.1L488.6 174.3L474.7 172.5L469.7 174.2zM456.4 172.5L461.6 170.9L449.4 169.4L443.9 170.8zM432.2 169.3L437.8 168.0L427.0 166.6L421.2 167.9zM410.9 166.5L416.8 165.3L407.1 164.1L401.1 165.3zM391.9 164.1L398.0 163.0L389.3 161.9L383.2 162.9zM374.9 161.9L381.1 160.9L373.3 159.9L367.1 160.8zM359.6 159.9L365.8 159.0L358.8 158.1L352.5 158.9zM345.8 158.1L352.0 157.3L345.6 156.5L339.3 157.2zM333.2 156.4L339.4 155.7L333.5 155.0L327.3 155.6zM321.7 154.9L327.9 154.2L322.5 153.6L316.3 154.2zM311.1 153.5L317.3 152.9L312.3 152.3L306.2 152.9zM301.4 152.3L307.5 151.7L302.9 151.1L296.9 151.7zM292.5 151.1L298.5 150.6L294.2 150.1L288.2 150.6zM284.1 150.0L290.1 149.5L286.1 149.0L280.2 149.5zM276.4 149.0L282.3 148.6L278.6 148.1L272.8 148.5zM269.2 148.1L275.0 147.7L271.6 147.2L265.8 147.6zM262.5 147.2L268.2 146.8L265.0 146.4L259.4 146.8zM256.3 146.4L261.9 146.0L258.8 145.6L253.3 146.0zM250.4 145.6L255.9 145.3L253.0 144.9L247.6 145.3zM244.8 144.9L250.3 144.6L247.6 144.2L242.2 144.6zM239.6 144.2L245.0 143.9L242.5 143.6L237.2 143.9zM575.8 185.1L577.8 182.7L558.2 180.4L555.6 182.6zM536.9 180.3L540.1 178.2L523.3 176.2L519.6 178.1zM503.6 176.1L507.7 174.4L493.1 172.6L488.6 174.3zM474.7 172.5L479.4 171.0L466.5 169.5L461.6 170.9zM449.4 169.4L454.5 168.0L443.1 166.7L437.8 168.0zM427.0 166.6L432.4 165.4L422.3 164.2L416.8 165.3zM407.1 164.1L412.8 163.0L403.7 162.0L398.0 163.0zM389.3 161.9L395.1 160.9L386.9 160.0L381.1 160.9zM373.3 159.9L379.2 159.0L371.8 158.1L365.8 159.0zM358.8 158.1L364.7 157.3L358.0 156.5L352.0 157.3zM345.6 156.5L351.5 155.7L345.4 155.0L339.4 155.7zM333.5 155.0L339.5 154.3L333.8 153.6L327.9 154.2zM322.5 153.6L328.4 153.0L323.2 152.3L317.3 152.9zM312.3 152.3L318.2 151.7L313.4 151.2L307.5 151.7zM302.9 151.1L308.7 150.6L304.3 150.1L298.5 150.6zM294.2 150.1L300.0 149.6L295.8 149.1L290.1 149.5zM286.1 149.0L291.8 148.6L288.0 148.1L282.3 148.6zM278.6 148.1L284.2 147.7L280.6 147.3L275.0 147.7zM271.6 147.2L277.1 146.8L273.7 146.4L268.2 146.8zM265.0 146.4L270.5 146.0L267.3 145.7L261.9 146.0zM258.8 145.6L264.2 145.3L261.3 144.9L255.9 145.3zM253.0 144.9L258.4 144.6L255.6 144.3L250.3 144.6zM247.6 144.2L252.8 143.9L250.2 143.6L245.0 143.9zM558.2 180.4L560.7 178.4L543.1 176.3L540.1 178.2zM523.3 176.2L526.8 174.5L511.5 172.7L507.7 174.4zM493.1 172.6L497.2 171.1L483.8 169.5L479.4 171.0zM466.5 169.5L471.2 168.1L459.3 166.7L454.5 168.0zM443.1 166.7L448.2 165.4L437.6 164.2L432.4 165.4zM422.3 164.2L427.6 163.1L418.2 162.0L412.8 163.0zM403.7 162.0L409.2 161.0L400.7 160.0L395.1 160.9zM386.9 160.0L392.5 159.1L384.8 158.2L379.2 159.0zM371.8 158.1L377.4 157.3L370.4 156.5L364.7 157.3zM358.0 156.5L363.7 155.8L357.2 155.0L351.5 155.7zM345.4 155.0L351.1 154.3L345.2 153.6L339.5 154.3zM333.8 153.6L339.5 153.0L334.1 152.4L328.4 153.0zM323.2 152.3L328.9 151.8L323.8 151.2L318.2 151.7zM313.4 151.2L319.0 150.6L314.3 150.1L308.7 150.6zM304.3 150.1L309.9 149.6L305.5 149.1L300.0 149.6zM295.8 149.1L301.4 148.6L297.3 148.2L291.8 148.6zM288.0 148.1L293.4 147.7L289.7 147.3L284.2 147.7zM280.6 147.3L286.0 146.9L282.5 146.5L277.1 146.8zM273.7 146.4L279.1 146.1L275.8 145.7L270.5 146.0zM267.3 145.7L272.6 145.3L269.5 145.0L264.2 145.3zM261.3 144.9L266.5 144.6L263.5 144.3L258.4 144.6zM255.6 144.3L260.7 144.0L257.9 143.6L252.8 143.9zM579.6 180.5L581.3 178.5L563.0 176.4L560.7 178.4zM543.1 176.3L545.9 174.5L530.0 172.8L526.8 174.5zM511.5 172.7L515.1 171.1L501.1 169.6L497.2 171.1zM483.8 169.5L488.0 168.2L475.6 166.8L471.2 168.1zM459.3 166.7L463.9 165.5L452.9 164.3L448.2 165.4zM437.6 164.2L442.5 163.1L432.6 162.1L427.6 163.1zM418.2 162.0L423.3 161.0L414.4 160.0L409.2 161.0zM400.7 160.0L405.9 159.1L397.9 158.2L392.5 159.1zM384.8 158.2L390.2 157.4L382.9 156.6L377.4 157.3zM370.4 156.5L375.8 155.8L369.1 155.1L363.7 155.8zM357.2 155.0L362.7 154.3L356.6 153.7L351.1 154.3zM345.2 153.6L350.7 153.0L345.0 152.4L339.5 153.0zM334.1 152.4L339.6 151.8L334.3 151.2L328.9 151.8zM323.8 151.2L329.3 150.7L324.4 150.1L319.0 150.6zM314.3 150.1L319.8 149.6L315.3 149.1L309.9 149.6zM305.5 149.1L310.9 148.6L306.7 148.2L301.4 148.6zM297.3 148.2L302.7 147.7L298.7 147.3L293.4 147.7zM289.7 147.3L294.9 146.9L291.3 146.5L286.0 146.9zM282.5 146.5L287.7 146.1L284.3 145.7L279.1 146.1zM275.8 145.7L280.9 145.3L277.7 145.0L272.6 145.3zM269.5 145.0L274.6 144.6L271.5 144.3L266.5 144.6zM263.5 144.3L268.6 144.0L265.7 143.6L260.7 144.0zM563.0 176.4L565.1 174.6L548.5 172.9L545.9 174.5zM530.0 172.8L533.0 171.2L518.4 169.7L515.1 171.1zM501.1 169.6L504.8 168.2L491.9 166.9L488.0 168.2zM475.6 166.8L479.8 165.6L468.3 164.4L463.9 165.5zM452.9 164.3L457.4 163.2L447.2 162.1L442.5 163.1zM432.6 162.1L437.4 161.1L428.2 160.1L423.3 161.0zM414.4 160.0L419.4 159.2L411.0 158.3L405.9 159.1zM397.9 158.2L403.0 157.4L395.3 156.6L390.2 157.4zM382.9 156.6L388.0 155.8L381.1 155.1L375.8 155.8zM369.1 155.1L374.4 154.4L368.0 153.7L362.7 154.3zM356.6 153.7L361.9 153.1L356.0 152.4L350.7 153.0zM345.0 152.4L350.3 151.8L344.8 151.2L339.6 151.8zM334.3 151.2L339.6 150.7L334.6 150.2L329.3 150.7zM324.4 150.1L329.7 149.6L325.0 149.1L319.8 149.6zM315.3 149.1L320.5 148.7L316.1 148.2L310.9 148.6zM306.7 148.2L311.9 147.7L307.8 147.3L302.7 147.7zM298.7 147.3L303.9 146.9L300.1 146.5L294.9 146.9zM291.3 146.5L296.4 146.1L292.8 145.7L287.7 146.1zM284.3 145.7L289.3 145.3L285.9 145.0L280.9 145.3zM277.7 145.0L282.7 144.6L279.5 144.3L274.6 144.6zM271.5 144.3L276.4 144.0L273.4 143.7L268.6 144.0zM548.5 172.9L551.0 171.3L535.9 169.8L533.0 171.2zM518.4 169.7L521.6 168.3L508.2 166.9L504.8 168.2zM491.9 166.9L495.6 165.6L483.7 164.4L479.8 165.6zM468.3 164.4L472.4 163.3L461.7 162.2L457.4 163.2zM447.2 162.1L451.6 161.1L442.0 160.1L437.4 161.1zM428.2 160.1L432.8 159.2L424.1 158.3L419.4 159.2zM411.0 158.3L415.8 157.5L407.9 156.6L403.0 157.4zM395.3 156.6L400.3 155.9L393.0 155.1L388.0 155.8zM381.1 155.1L386.1 154.4L379.4 153.7L374.4 154.4zM368.0 153.7L373.1 153.1L366.9 152.5L361.9 153.1zM356.0 152.4L361.0 151.9L355.4 151.3L350.3 151.8zM344.8 151.2L349.9 150.7L344.7 150.2L339.6 150.7zM334.6 150.2L339.7 149.7L334.8 149.2L329.7 149.6zM325.0 149.1L330.1 148.7L325.5 148.2L320.5 148.7zM316.1 148.2L321.2 147.8L316.9 147.3L311.9 147.7zM307.8 147.3L312.8 146.9L308.9 146.5L303.9 146.9zM300.1 146.5L305.0 146.1L301.3 145.7L296.4 146.1zM292.8 145.7L297.7 145.4L294.2 145.0L289.3 145.3zM285.9 145.0L290.8 144.7L287.5 144.3L282.7 144.6zM279.5 144.3L284.3 144.0L281.2 143.7L276.4 144.0zM567.2 173.0L569.0 171.4L553.3 169.8L551.0 171.3zM535.9 169.8L538.5 168.4L524.6 167.0L521.6 168.3zM508.2 166.9L511.5 165.7L499.1 164.5L495.6 165.6zM483.7 164.4L487.4 163.3L476.3 162.2L472.4 163.3zM461.7 162.2L465.8 161.2L455.8 160.2L451.6 161.1zM442.0 160.1L446.3 159.2L437.3 158.4L432.8 159.2zM424.1 158.3L428.6 157.5L420.4 156.7L415.8 157.5zM407.9 156.6L412.5 155.9L405.0 155.2L400.3 155.9zM393.0 155.1L397.8 154.5L390.9 153.8L386.1 154.4zM379.4 153.7L384.3 153.1L377.9 152.5L373.1 153.1zM366.9 152.5L371.8 151.9L365.9 151.3L361.0 151.9zM355.4 151.3L360.3 150.7L354.9 150.2L349.9 150.7zM344.7 150.2L349.6 149.7L344.6 149.2L339.7 149.7zM334.8 149.2L339.7 148.7L335.0 148.2L330.1 148.7zM325.5 148.2L330.4 147.8L326.0 147.4L321.2 147.8zM316.9 147.3L321.8 146.9L317.7 146.5L312.8 146.9zM308.9 146.5L313.7 146.1L309.8 145.8L305.0 146.1zM301.3 145.7L306.1 145.4L302.5 145.0L297.7 145.4zM294.2 145.0L299.0 144.7L295.5 144.3L290.8 144.7zM287.5 144.3L292.2 144.0L289.0 143.7L284.3 144.0zM553.3 169.8L555.5 168.4L541.1 167.1L538.5 168.4zM524.6 167.0L527.5 165.8L514.6 164.5L511.5 165.7zM499.1 164.5L502.5 163.4L491.0 162.3L487.4 163.3zM476.3 162.2L480.1 161.2L469.7 160.2L465.8 161.2zM455.8 160.2L459.8 159.3L450.5 158.4L446.3 159.2zM437.3 158.4L441.5 157.5L433.0 156.7L428.6 157.5zM420.4 156.7L424.8 155.9L417.0 155.2L412.5 155.9zM405.0 155.2L409.5 154.5L402.4 153.8L397.8 154.5zM390.9 153.8L395.5 153.1L388.9 152.5L384.3 153.1zM377.9 152.5L382.6 151.9L376.5 151.3L371.8 151.9zM365.9 151.3L370.7 150.8L365.0 150.2L360.3 150.7zM354.9 150.2L359.6 149.7L354.4 149.2L349.6 149.7zM344.6 149.2L349.3 148.7L344.4 148.3L339.7 148.7zM335.0 148.2L339.7 147.8L335.2 147.4L330.4 147.8zM326.0 147.4L330.8 147.0L326.5 146.5L321.8 146.9zM317.7 146.5L322.4 146.2L318.4 145.8L313.7 146.1zM309.8 145.8L314.5 145.4L310.8 145.0L306.1 145.4zM302.5 145.0L307.1 144.7L303.6 144.4L299.0 144.7zM295.5 144.3L300.1 144.0L296.8 143.7L292.2 144.0zM570.8 169.9L572.5 168.5L557.5 167.1L555.5 168.4zM541.1 167.1L543.4 165.8L530.1 164.6L527.5 165.8zM514.6 164.5L517.6 163.4L505.6 162.3L502.5 163.4zM491.0 162.3L494.3 161.3L483.6 160.3L480.1 161.2zM469.7 160.2L473.4 159.3L463.7 158.4L459.8 159.3zM450.5 158.4L454.4 157.6L445.6 156.8L441.5 157.5zM433.0 156.7L437.1 156.0L429.0 155.2L424.8 155.9zM417.0 155.2L421.3 154.5L413.9 153.8L409.5 154.5zM402.4 153.8L406.8 153.2L400.0 152.5L395.5 153.1zM388.9 152.5L393.4 151.9L387.1 151.4L382.6 151.9zM376.5 151.3L381.1 150.8L375.2 150.3L370.7 150.8zM365.0 150.2L369.6 149.7L364.2 149.2L359.6 149.7zM354.4 149.2L359.0 148.8L353.9 148.3L349.3 148.7zM344.4 148.3L349.0 147.8L344.3 147.4L339.7 147.8zM335.2 147.4L339.8 147.0L335.4 146.6L330.8 147.0zM326.5 146.5L331.1 146.2L326.9 145.8L322.4 146.2zM318.4 145.8L322.9 145.4L319.0 145.1L314.5 145.4zM310.8 145.0L315.3 144.7L311.6 144.4L307.1 144.7zM303.6 144.4L308.1 144.0L304.6 143.7L300.1 144.0zM557.5 167.1L559.5 165.9L545.7 164.6L543.4 165.8zM530.1 164.6L532.7 163.5L520.4 162.4L517.6 163.4zM505.6 162.3L508.7 161.3L497.5 160.3L494.3 161.3zM483.6 160.3L487.0 159.4L476.9 158.5L473.4 159.3zM463.7 158.4L467.3 157.6L458.2 156.8L454.4 157.6zM445.6 156.8L449.5 156.0L441.1 155.3L437.1 156.0zM429.0 155.2L433.1 154.6L425.4 153.9L421.3 154.5zM413.9 153.8L418.1 153.2L411.0 152.6L406.8 153.2zM400.0 152.5L404.3 152.0L397.7 151.4L393.4 151.9zM387.1 151.4L391.5 150.8L385.4 150.3L381.1 150.8zM375.2 150.3L379.6 149.8L374.0 149.3L369.6 149.7zM364.2 149.2L368.6 148.8L363.4 148.3L359.0 148.8zM353.9 148.3L358.4 147.9L353.5 147.4L349.0 147.8zM344.3 147.4L348.8 147.0L344.2 146.6L339.8 147.0zM335.4 146.6L339.8 146.2L335.5 145.8L331.1 146.2zM326.9 145.8L331.4 145.4L327.4 145.1L322.9 145.4zM319.0 145.1L323.5 144.7L319.7 144.4L315.3 144.7zM311.6 144.4L316.0 144.1L312.4 143.7L308.1 144.0zM574.1 167.2L575.6 165.9L561.3 164.7L559.5 165.9zM545.7 164.6L547.9 163.5L535.1 162.4L532.7 163.5zM520.4 162.4L523.0 161.4L511.5 160.4L508.7 161.3zM497.5 160.3L500.6 159.4L490.2 158.5L487.0 159.4zM476.9 158.5L480.3 157.7L470.8 156.8L467.3 157.6zM458.2 156.8L461.8 156.1L453.2 155.3L449.5 156.0zM441.1 155.3L444.9 154.6L437.0 153.9L433.1 154.6zM425.4 153.9L429.4 153.2L422.1 152.6L418.1 153.2zM411.0 152.6L415.1 152.0L408.4 151.4L404.3 152.0zM397.7 151.4L401.9 150.9L395.7 150.3L391.5 150.8zM385.4 150.3L389.7 149.8L383.9 149.3L379.6 149.8zM374.0 149.3L378.3 148.8L372.9 148.3L368.6 148.8zM363.4 148.3L367.7 147.9L362.7 147.4L358.4 147.9zM353.5 147.4L357.8 147.0L353.1 146.6L348.8 147.0zM344.2 146.6L348.5 146.2L344.1 145.8L339.8 146.2zM335.5 145.8L339.8 145.5L335.7 145.1L331.4 145.4zM327.4 145.1L331.6 144.7L327.7 144.4L323.5 144.7zM319.7 144.4L324.0 144.1L320.3 143.8L316.0 144.1zM561.3 164.7L563.1 163.6L549.9 162.5L547.9 163.5zM535.1 162.4L537.4 161.4L525.5 160.4L523.0 161.4zM511.5 160.4L514.3 159.5L503.5 158.6L500.6 159.4zM490.2 158.5L493.3 157.7L483.5 156.9L480.3 157.7zM470.8 156.8L474.2 156.1L465.3 155.3L461.8 156.1zM453.2 155.3L456.8 154.6L448.6 153.9L444.9 154.6zM437.0 153.9L440.7 153.3L433.2 152.6L429.4 153.2zM422.1 152.6L426.0 152.0L419.0 151.4L415.1 152.0zM408.4 151.4L412.4 150.9L405.9 150.3L401.9 150.9zM395.7 150.3L399.7 149.8L393.7 149.3L389.7 149.8zM383.9 149.3L388.0 148.8L382.4 148.4L378.3 148.8zM372.9 148.3L377.0 147.9L371.8 147.5L367.7 147.9zM362.7 147.4L366.8 147.0L362.0 146.6L357.8 147.0zM353.1 146.6L357.3 146.2L352.7 145.8L348.5 146.2zM344.1 145.8L348.3 145.5L344.0 145.1L339.8 145.5zM335.7 145.1L339.9 144.8L335.8 144.4L331.6 144.7zM327.7 144.4L331.9 144.1L328.1 143.8L324.0 144.1zM549.9 162.5L551.8 161.5L539.6 160.5L537.4 161.4zM525.5 160.4L528.0 159.5L516.9 158.6L514.3 159.5zM503.5 158.6L506.3 157.7L496.2 156.9L493.3 157.7zM483.5 156.9L486.6 156.1L477.4 155.4L474.2 156.1zM465.3 155.3L468.6 154.7L460.2 154.0L456.8 154.6zM448.6 153.9L452.1 153.3L444.3 152.7L440.7 153.3zM433.2 152.6L436.9 152.1L429.7 151.5L426.0 152.0zM419.0 151.4L422.8 150.9L416.2 150.4L412.4 150.9zM405.9 150.3L409.8 149.8L403.6 149.3L399.7 149.8zM393.7 149.3L397.7 148.8L392.0 148.4L388.0 148.8zM382.4 148.4L386.4 147.9L381.1 147.5L377.0 147.9zM371.8 147.5L375.9 147.1L370.9 146.6L366.8 147.0zM362.0 146.6L366.0 146.3L361.3 145.9L357.3 146.2zM352.7 145.8L356.8 145.5L352.3 145.1L348.3 145.5zM344.0 145.1L348.1 144.8L343.9 144.4L339.9 144.8zM335.8 144.4L339.9 144.1L336.0 143.8L331.9 144.1zM564.7 162.5L566.3 161.5L553.7 160.5L551.8 161.5zM539.6 160.5L541.7 159.6L530.3 158.7L528.0 159.5zM516.9 158.6L519.4 157.8L509.0 157.0L506.3 157.7zM496.2 156.9L499.1 156.2L489.6 155.4L486.6 156.1zM477.4 155.4L480.5 154.7L471.8 154.0L468.6 154.7zM460.2 154.0L463.5 153.3L455.5 152.7L452.1 153.3zM444.3 152.7L447.8 152.1L440.4 151.5L436.9 152.1zM429.7 151.5L433.3 150.9L426.5 150.4L422.8 150.9zM416.2 150.4L419.9 149.9L413.5 149.4L409.8 149.8zM403.6 149.3L407.4 148.9L401.5 148.4L397.7 148.8zM392.0 148.4L395.8 147.9L390.3 147.5L386.4 147.9zM381.1 147.5L384.9 147.1L379.8 146.7L375.9 147.1zM370.9 146.6L374.8 146.3L369.9 145.9L366.0 146.3zM361.3 145.9L365.3 145.5L360.7 145.1L356.8 145.5zM352.3 145.1L356.3 144.8L352.0 144.5L348.1 144.8zM343.9 144.4L347.9 144.1L343.8 143.8L339.9 144.1zM553.7 160.5L555.4 159.6L543.7 158.7L541.7 159.6zM530.3 158.7L532.5 157.8L521.8 157.0L519.4 157.8zM509.0 157.0L511.5 156.2L501.8 155.5L499.1 156.2zM489.6 155.4L492.4 154.7L483.5 154.0L480.5 154.7zM471.8 154.0L474.9 153.4L466.7 152.7L463.5 153.3zM455.5 152.7L458.7 152.1L451.1 151.5L447.8 152.1zM440.4 151.5L443.8 151.0L436.8 150.4L433.3 150.9zM426.5 150.4L430.0 149.9L423.5 149.4L419.9 149.9zM413.5 149.4L417.2 148.9L411.1 148.4L407.4 148.9zM401.5 148.4L405.2 148.0L399.5 147.5L395.8 147.9zM390.3 147.5L394.0 147.1L388.7 146.7L384.9 147.1zM379.8 146.7L383.6 146.3L378.6 145.9L374.8 146.3zM369.9 145.9L373.8 145.5L369.1 145.2L365.3 145.5zM360.7 145.1L364.5 144.8L360.1 144.5L356.3 144.8zM352.0 144.5L355.9 144.1L351.7 143.8L347.9 144.1zM567.8 160.6L569.2 159.7L557.1 158.7L555.4 159.6zM543.7 158.7L545.6 157.9L534.6 157.0L532.5 157.8zM521.8 157.0L524.0 156.2L514.0 155.5L511.5 156.2zM501.8 155.5L504.4 154.8L495.2 154.1L492.4 154.7zM483.5 154.0L486.3 153.4L477.8 152.8L474.9 153.4zM466.7 152.7L469.7 152.1L461.9 151.6L458.7 152.1zM451.1 151.5L454.4 151.0L447.1 150.4L443.8 151.0zM436.8 150.4L440.1 149.9L433.4 149.4L430.0 149.9zM423.5 149.4L426.9 148.9L420.7 148.4L417.2 148.9zM411.1 148.4L414.6 148.0L408.8 147.5L405.2 148.0zM399.5 147.5L403.1 147.1L397.7 146.7L394.0 147.1zM388.7 146.7L392.4 146.3L387.2 145.9L383.6 146.3zM378.6 145.9L382.3 145.5L377.5 145.2L373.8 145.5zM369.1 145.2L372.8 144.8L368.3 144.5L364.5 144.8zM360.1 144.5L363.9 144.2L359.6 143.8L355.9 144.1zM557.1 158.7L558.7 157.9L547.4 157.1L545.6 157.9zM534.6 157.0L536.6 156.3L526.2 155.5L524.0 156.2zM514.0 155.5L516.3 154.8L506.9 154.1L504.4 154.8zM495.2 154.1L497.8 153.4L489.1 152.8L486.3 153.4zM477.8 152.8L480.7 152.2L472.6 151.6L469.7 152.1zM461.9 151.6L464.9 151.0L457.5 150.5L454.4 151.0zM447.1 150.4L450.3 149.9L443.4 149.4L440.1 149.9zM433.4 149.4L436.7 148.9L430.3 148.5L426.9 148.9zM420.7 148.4L424.0 148.0L418.0 147.6L414.6 148.0zM408.8 147.5L412.2 147.1L406.6 146.7L403.1 147.1zM397.7 146.7L401.2 146.3L395.9 145.9L392.4 146.3zM387.2 145.9L390.8 145.6L385.8 145.2L382.3 145.5zM377.5 145.2L381.1 144.8L376.4 144.5L372.8 144.8zM368.3 144.5L371.9 144.2L367.5 143.9L363.9 144.2zM570.6 158.8L571.9 158.0L560.2 157.1L558.7 157.9zM547.4 157.1L549.1 156.3L538.5 155.6L536.6 156.3zM526.2 155.5L528.3 154.8L518.6 154.1L516.3 154.8zM506.9 154.1L509.2 153.5L500.3 152.8L497.8 153.4zM489.1 152.8L491.7 152.2L483.4 151.6L480.7 152.2zM472.6 151.6L475.5 151.0L467.8 150.5L464.9 151.0zM457.5 150.5L460.4 150.0L453.3 149.5L450.3 149.9zM443.4 149.4L446.5 149.0L439.9 148.5L436.7 148.9zM430.3 148.5L433.5 148.0L427.3 147.6L424.0 148.0zM418.0 147.6L421.4 147.2L415.6 146.7L412.2 147.1zM406.6 146.7L410.0 146.3L404.6 146.0L401.2 146.3zM395.9 145.9L399.3 145.6L394.3 145.2L390.8 145.6zM385.8 145.2L389.3 144.9L384.5 144.5L381.1 144.8zM376.4 144.5L379.9 144.2L375.4 143.9L371.9 144.2zM560.2 157.1L561.7 156.4L550.8 155.6L549.1 156.3zM538.5 155.6L540.3 154.9L530.3 154.2L528.3 154.8zM518.6 154.1L520.7 153.5L511.5 152.9L509.2 153.5zM500.3 152.8L502.7 152.2L494.2 151.6L491.7 152.2zM483.4 151.6L486.1 151.1L478.2 150.5L475.5 151.0zM467.8 150.5L470.6 150.0L463.3 149.5L460.4 150.0zM453.3 149.5L456.3 149.0L449.5 148.5L446.5 149.0zM439.9 148.5L443.0 148.1L436.6 147.6L433.5 148.0zM427.3 147.6L430.5 147.2L424.6 146.8L421.4 147.2zM415.6 146.7L418.8 146.4L413.3 146.0L410.0 146.3zM404.6 146.0L407.9 145.6L402.7 145.2L399.3 145.6zM394.3 145.2L397.6 144.9L392.7 144.5L389.3 144.9zM384.5 144.5L387.9 144.2L383.3 143.9L379.9 144.2zM550.8 155.6L552.4 154.9L542.1 154.2L540.3 154.9zM530.3 154.2L532.3 153.5L522.8 152.9L520.7 153.5zM511.5 152.9L513.8 152.3L505.0 151.7L502.7 152.2zM494.2 151.6L496.7 151.1L488.6 150.5L486.1 151.1zM478.2 150.5L480.8 150.0L473.4 149.5L470.6 150.0zM463.3 149.5L466.1 149.0L459.2 148.5L456.3 149.0zM449.5 148.5L452.4 148.1L445.9 147.6L443.0 148.1zM436.6 147.6L439.6 147.2L433.6 146.8L430.5 147.2zM424.6 146.8L427.7 146.4L422.0 146.0L418.8 146.4zM413.3 146.0L416.5 145.6L411.1 145.3L407.9 145.6zM402.7 145.2L405.9 144.9L400.9 144.6L397.6 144.9zM392.7 144.5L396.0 144.2L391.2 143.9L387.9 144.2zM563.1 155.6L564.5 154.9L553.9 154.2L552.4 154.9zM542.1 154.2L543.8 153.6L534.1 152.9L532.3 153.5zM522.8 152.9L524.8 152.3L515.9 151.7L513.8 152.3zM505.0 151.7L507.3 151.1L499.0 150.6L496.7 151.1zM488.6 150.5L491.1 150.0L483.4 149.5L480.8 150.0zM473.4 149.5L476.0 149.0L468.8 148.6L466.1 149.0zM459.2 148.5L461.9 148.1L455.3 147.7L452.4 148.1zM445.9 147.6L448.8 147.2L442.6 146.8L439.6 147.2zM433.6 146.8L436.5 146.4L430.7 146.0L427.7 146.4zM422.0 146.0L425.0 145.6L419.6 145.3L416.5 145.6zM411.1 145.3L414.2 144.9L409.1 144.6L405.9 144.9zM400.9 144.6L404.1 144.2L399.2 143.9L396.0 144.2zM553.9 154.2L555.4 153.6L545.5 152.9L543.8 153.6zM534.1 152.9L535.9 152.3L526.8 151.7L524.8 152.3zM515.9 151.7L517.9 151.2L509.5 150.6L507.3 151.1zM499.0 150.6L501.3 150.1L493.4 149.6L491.1 150.0zM483.4 149.5L485.8 149.1L478.5 148.6L476.0 149.0zM468.8 148.6L471.4 148.1L464.6 147.7L461.9 148.1zM455.3 147.7L458.0 147.2L451.6 146.8L448.8 147.2zM442.6 146.8L445.4 146.4L439.4 146.0L436.5 146.4zM430.7 146.0L433.6 145.7L428.0 145.3L425.0 145.6zM419.6 145.3L422.6 144.9L417.3 144.6L414.2 144.9zM409.1 144.6L412.1 144.3L407.1 143.9L404.1 144.2zM565.7 154.3L567.0 153.6L556.8 153.0L555.4 153.6zM545.5 152.9L547.0 152.4L537.6 151.8L535.9 152.3zM526.8 151.7L528.6 151.2L519.9 150.6L517.9 151.2zM509.5 150.6L511.6 150.1L503.5 149.6L501.3 150.1zM493.4 149.6L495.7 149.1L488.2 148.6L485.8 149.1zM478.5 148.6L481.0 148.1L474.0 147.7L471.4 148.1zM464.6 147.7L467.2 147.3L460.7 146.8L458.0 147.2zM451.6 146.8L454.3 146.4L448.2 146.1L445.4 146.4zM439.4 146.0L442.2 145.7L436.5 145.3L433.6 145.7zM428.0 145.3L430.9 145.0L425.5 144.6L422.6 144.9zM417.3 144.6L420.2 144.3L415.1 143.9L412.1 144.3zM556.8 153.0L558.2 152.4L548.6 151.8L547.0 152.4zM537.6 151.8L539.3 151.2L530.4 150.7L528.6 151.2zM519.9 150.6L521.8 150.1L513.6 149.6L511.6 150.1zM503.5 149.6L505.6 149.1L497.9 148.6L495.7 149.1zM488.2 148.6L490.5 148.2L483.3 147.7L481.0 148.1zM474.0 147.7L476.4 147.3L469.7 146.9L467.2 147.3zM460.7 146.8L463.2 146.5L456.9 146.1L454.3 146.4zM448.2 146.1L450.9 145.7L445.0 145.3L442.2 145.7zM436.5 145.3L439.2 145.0L433.7 144.6L430.9 145.0zM425.5 144.6L428.3 144.3L423.1 144.0L420.2 144.3zM568.2 153.0L569.3 152.4L559.5 151.8L558.2 152.4zM548.6 151.8L550.0 151.2L540.9 150.7L539.3 151.2zM530.4 150.7L532.1 150.1L523.7 149.6L521.8 150.1zM513.6 149.6L515.5 149.1L507.7 148.7L505.6 149.1zM497.9 148.6L500.1 148.2L492.7 147.7L490.5 148.2zM483.3 147.7L485.6 147.3L478.8 146.9L476.4 147.3zM469.7 146.9L472.1 146.5L465.7 146.1L463.2 146.5zM456.9 146.1L459.5 145.7L453.5 145.3L450.9 145.7zM445.0 145.3L447.6 145.0L441.9 144.6L439.2 145.0zM433.7 144.6L436.4 144.3L431.1 144.0L428.3 144.3zM559.5 151.8L560.7 151.3L551.4 150.7L550.0 151.2zM540.9 150.7L542.4 150.2L533.8 149.7L532.1 150.1zM523.7 149.6L525.5 149.2L517.4 148.7L515.5 149.1zM507.7 148.7L509.6 148.2L502.1 147.8L500.1 148.2zM492.7 147.7L494.9 147.3L487.9 146.9L485.6 147.3zM478.8 146.9L481.1 146.5L474.5 146.1L472.1 146.5zM465.7 146.1L468.1 145.7L462.0 145.4L459.5 145.7zM453.5 145.3L456.0 145.0L450.2 144.7L447.6 145.0zM441.9 144.6L444.5 144.3L439.1 144.0L436.4 144.3zM570.4 151.8L571.5 151.3L562.0 150.7L560.7 151.3zM551.4 150.7L552.8 150.2L543.9 149.7L542.4 150.2zM533.8 149.7L535.4 149.2L527.2 148.7L525.5 149.2zM517.4 148.7L519.2 148.2L511.6 147.8L509.6 148.2zM502.1 147.8L504.1 147.3L497.0 146.9L494.9 147.3zM487.9 146.9L490.0 146.5L483.3 146.1L481.1 146.5zM474.5 146.1L476.8 145.7L470.5 145.4L468.1 145.7zM462.0 145.4L464.4 145.0L458.4 144.7L456.0 145.0zM450.2 144.7L452.7 144.3L447.1 144.0L444.5 144.3zM562.0 150.7L563.1 150.2L554.1 149.7L552.8 150.2zM543.9 149.7L545.4 149.2L537.0 148.7L535.4 149.2zM527.2 148.7L528.8 148.3L521.0 147.8L519.2 148.2zM511.6 147.8L513.4 147.4L506.1 147.0L504.1 147.3zM497.0 146.9L499.0 146.5L492.1 146.1L490.0 146.5zM483.3 146.1L485.5 145.8L479.0 145.4L476.8 145.7zM470.5 145.4L472.8 145.0L466.7 144.7L464.4 145.0zM458.4 144.7L460.8 144.4L455.1 144.0L452.7 144.3zM447.1 144.0L449.5 143.7L444.2 143.4L441.6 143.7zM554.1 149.7L555.4 149.2L546.8 148.7L545.4 149.2zM537.0 148.7L538.5 148.3L530.5 147.8L528.8 148.3zM521.0 147.8L522.7 147.4L515.2 147.0L513.4 147.4zM506.1 147.0L508.0 146.6L501.0 146.2L499.0 146.5zM492.1 146.1L494.2 145.8L487.6 145.4L485.5 145.8zM479.0 145.4L481.2 145.1L475.0 144.7L472.8 145.0zM466.7 144.7L469.0 144.4L463.1 144.0L460.8 144.4zM455.1 144.0L457.5 143.7L452.0 143.4L449.5 143.7zM564.3 149.7L565.4 149.3L556.6 148.8L555.4 149.2zM546.8 148.7L548.1 148.3L539.9 147.8L538.5 148.3zM530.5 147.8L532.0 147.4L524.4 147.0L522.7 147.4zM515.2 147.0L517.0 146.6L509.8 146.2L508.0 146.6zM501.0 146.2L502.9 145.8L496.1 145.4L494.2 145.8zM487.6 145.4L489.6 145.1L483.3 144.7L481.2 145.1zM475.0 144.7L477.1 144.4L471.2 144.1L469.0 144.4zM463.1 144.0L465.4 143.7L459.8 143.4L457.5 143.7zM556.6 148.8L557.8 148.3L549.4 147.9L548.1 148.3zM539.9 147.8L541.3 147.4L533.5 147.0L532.0 147.4zM524.4 147.0L526.0 146.6L518.7 146.2L517.0 146.6zM509.8 146.2L511.6 145.8L504.7 145.5L502.9 145.8zM496.1 145.4L498.0 145.1L491.6 144.7L489.6 145.1zM483.3 144.7L485.3 144.4L479.2 144.1L477.1 144.4zM471.2 144.1L473.3 143.8L467.6 143.4L465.4 143.7zM566.4 148.8L567.4 148.3L558.9 147.9L557.8 148.3zM549.4 147.9L550.7 147.5L542.7 147.0L541.3 147.4zM533.5 147.0L535.0 146.6L527.5 146.2L526.0 146.6zM518.7 146.2L520.3 145.8L513.3 145.5L511.6 145.8zM504.7 145.5L506.5 145.1L499.9 144.8L498.0 145.1zM491.6 144.7L493.5 144.4L487.3 144.1L485.3 144.4zM479.2 144.1L481.3 143.8L475.4 143.5L473.3 143.8zM558.9 147.9L560.0 147.5L551.9 147.1L550.7 147.5zM542.7 147.0L544.0 146.6L536.4 146.2L535.0 146.6zM527.5 146.2L529.0 145.9L521.9 145.5L520.3 145.8zM513.3 145.5L515.0 145.1L508.2 144.8L506.5 145.1zM499.9 144.8L501.7 144.4L495.4 144.1L493.5 144.4zM487.3 144.1L489.2 143.8L483.3 143.5L481.3 143.8zM568.4 147.9L569.4 147.5L561.1 147.1L560.0 147.5zM551.9 147.1L553.1 146.7L545.3 146.3L544.0 146.6zM536.4 146.2L537.8 145.9L530.5 145.5L529.0 145.9zM521.9 145.5L523.4 145.1L516.6 144.8L515.0 145.1zM508.2 144.8L509.9 144.5L503.5 144.1L501.7 144.4zM495.4 144.1L497.2 143.8L491.1 143.5L489.2 143.8zM561.1 147.1L562.1 146.7L554.2 146.3L553.1 146.7zM545.3 146.3L546.6 145.9L539.1 145.5L537.8 145.9zM530.5 145.5L531.9 145.2L524.9 144.8L523.4 145.1zM516.6 144.8L518.2 144.5L511.6 144.1L509.9 144.5zM503.5 144.1L505.2 143.8L499.0 143.5L497.2 143.8zM554.2 146.3L555.3 145.9L547.8 145.5L546.6 145.9zM539.1 145.5L540.4 145.2L533.3 144.8L531.9 145.2zM524.9 144.8L526.4 144.5L519.7 144.2L518.2 144.5zM511.6 144.1L513.2 143.8L506.8 143.5L505.2 143.8zM563.2 146.3L564.1 145.9L556.4 145.6L555.3 145.9zM547.8 145.5L548.9 145.2L541.7 144.8L540.4 145.2zM533.3 144.8L534.6 144.5L527.8 144.2L526.4 144.5zM519.7 144.2L521.2 143.8L514.7 143.5L513.2 143.8zM556.4 145.6L557.5 145.2L550.1 144.9L548.9 145.2zM541.7 144.8L542.9 144.5L536.0 144.2L534.6 144.5zM527.8 144.2L529.2 143.9L522.6 143.5L521.2 143.8zM565.1 145.6L566.0 145.2L558.5 144.9L557.5 145.2zM550.1 144.9L551.2 144.5L544.1 144.2L542.9 144.5zM536.0 144.2L537.2 143.9L530.5 143.6L529.2 143.9zM558.5 144.9L559.5 144.6L552.3 144.2L551.2 144.5zM544.1 144.2L545.3 143.9L538.5 143.6L537.2 143.9zM566.9 144.9L567.8 144.6L560.4 144.2L559.5 144.6zM552.3 144.2L553.3 143.9L546.4 143.6L545.3 143.9zM560.4 144.2L561.4 143.9L554.3 143.6L553.3 143.9z"/></g><g mask="url(#ml)"><path fill="#636a80" fill-opacity=".9" d="M123.1 422.9L124.7 421.9L79.5 186.0L79.2 186.0zM149.3 422.9L150.9 421.9L85.1 186.0L84.8 186.0zM201.8 422.9L203.1 421.9L96.3 186.0L96.0 186.0zM228.0 422.9L229.3 421.9L101.9 186.0L101.5 186.0zM254.2 422.9L255.4 421.9L107.5 186.0L107.1 186.0zM306.6 422.9L307.7 421.9L118.7 186.0L118.3 186.0zM332.9 422.9L333.8 421.9L124.3 186.0L123.9 186.0zM359.1 422.9L359.9 421.9L129.9 186.0L129.5 186.0zM411.5 422.9L412.2 421.9L141.0 186.0L140.7 186.0zM437.7 422.9L438.3 421.9L146.6 186.0L146.3 186.0zM463.9 422.9L464.5 421.9L152.2 186.0L151.9 186.0zM516.4 422.9L516.7 421.9L163.4 186.0L163.1 186.0zM542.6 422.9L542.9 421.9L169.0 186.0L168.7 186.0zM568.8 422.9L569.0 421.9L174.6 186.0L174.3 186.0zM621.2 422.9L621.3 421.9L185.8 186.0L185.5 186.0zM647.4 422.9L647.4 421.9L191.4 186.0L191.1 186.0zM673.7 422.9L673.5 421.9L196.9 186.0L196.6 186.0zM726.1 422.9L725.8 421.9L208.1 186.0L207.8 186.0zM752.3 422.9L751.9 421.9L213.7 186.0L213.4 186.0zM778.5 422.9L778.1 421.9L219.3 186.0L219.0 186.0zM831.0 422.9L830.3 421.9L230.5 186.0L230.2 186.0zM857.2 422.9L856.5 421.9L236.1 186.0L235.8 186.0zM883.4 422.9L882.6 421.9L241.7 186.0L241.4 186.0zM935.8 422.9L934.9 421.9L252.8 186.0L252.6 186.0zM962.0 422.9L961.0 421.9L258.4 186.0L258.2 186.0zM988.3 422.9L987.1 421.9L264.0 186.0L263.8 186.0zM1040.7 422.9L1039.4 421.9L275.2 186.0L275.0 186.0zM1066.9 422.9L1065.5 421.9L280.8 186.0L280.6 186.0zM1093.1 422.9L1091.7 421.9L286.4 186.0L286.2 186.0zM1145.6 422.9L1143.9 421.9L297.6 186.0L297.3 186.0zM1171.8 422.9L1170.0 421.9L303.2 186.0L302.9 186.0zM1198.0 422.9L1196.2 421.9L308.7 186.0L308.5 186.0zM1250.4 422.9L1248.4 421.9L319.9 186.0L319.7 186.0zM1276.6 422.9L1274.6 421.9L325.5 186.0L325.3 186.0zM1302.8 422.9L1300.7 421.9L331.1 186.0L330.9 186.0zM1355.3 422.9L1353.0 421.9L342.3 186.0L342.1 186.0zM1381.5 422.9L1379.1 421.9L347.9 186.0L347.7 186.0zM1407.7 422.9L1405.2 421.9L353.5 186.0L353.3 186.0zM1460.1 422.9L1457.5 421.9L364.7 186.0L364.5 186.0zM1486.4 422.9L1483.6 421.9L370.2 186.0L370.1 186.0zM1512.6 422.9L1509.8 421.9L375.8 186.0L375.7 186.0zM1565.0 422.9L1562.0 421.9L387.0 186.0L386.9 186.0zM1591.2 422.9L1588.2 421.9L392.6 186.0L392.4 186.0zM1617.4 422.9L1614.3 421.9L398.2 186.0L398.0 186.0zM1669.9 422.9L1666.6 421.9L409.4 186.0L409.2 186.0zM1696.1 422.9L1692.7 421.9L415.0 186.0L414.8 186.0zM1722.3 422.9L1718.8 421.9L420.6 186.0L420.4 186.0zM1774.7 422.9L1771.1 421.9L431.7 186.0L431.6 186.0zM1801.0 422.9L1797.2 421.9L437.3 186.0L437.2 186.0zM1827.2 422.9L1823.4 421.9L442.9 186.0L442.8 186.0zM1839.6 416.2L1835.8 415.3L454.1 186.0L454.0 186.0zM1786.6 403.4L1783.2 402.5L459.7 186.0L459.6 186.0zM1738.2 391.6L1735.0 390.8L465.3 186.0L465.2 186.0zM1652.5 370.7L1649.8 370.1L476.5 186.0L476.4 186.0zM1614.4 361.5L1611.9 360.9L482.1 186.0L482.0 186.0zM1579.0 352.9L1576.7 352.3L487.6 186.0L487.5 186.0zM1515.4 337.4L1513.4 336.9L498.8 186.0L498.7 186.0zM1486.7 330.4L1484.8 330.0L504.4 186.0L504.3 186.0zM1459.8 323.9L1458.0 323.5L510.0 186.0L509.9 186.0zM1410.8 312.0L1409.2 311.6L521.2 186.0L521.1 186.0zM1388.3 306.5L1386.9 306.2L526.8 186.0L526.7 186.0zM1367.2 301.4L1365.8 301.0L532.4 186.0L532.3 186.0zM1328.2 291.9L1326.9 291.6L543.5 186.0L543.5 186.0zM1310.2 287.5L1309.0 287.2L549.1 186.0L549.1 186.0zM1293.1 283.4L1292.0 283.1L554.7 186.0L554.7 186.0zM544.4 422.9L542.8 421.9L609.6 187.9L610.0 188.0zM516.8 422.9L515.3 421.9L603.8 187.2L604.2 187.3zM461.7 422.9L460.4 421.9L592.5 186.0L592.9 186.0zM434.1 422.9L432.9 421.9L586.6 186.0L587.0 186.0zM406.5 422.9L405.4 421.9L580.8 186.0L581.1 186.0zM351.4 422.9L350.4 421.9L569.0 186.0L569.4 186.0zM323.8 422.9L322.9 421.9L563.1 186.0L563.5 186.0zM296.2 422.9L295.5 421.9L557.2 186.0L557.6 186.0zM241.1 422.9L240.5 421.9L545.5 186.0L545.8 186.0zM213.5 422.9L213.0 421.9L539.6 186.0L539.9 186.0zM185.9 422.9L185.5 421.9L533.7 186.0L534.1 186.0zM130.8 422.9L130.6 421.9L522.0 186.0L522.3 186.0zM103.2 422.9L103.1 421.9L516.1 186.0L516.4 186.0zM75.6 422.9L75.6 421.9L510.2 186.0L510.5 186.0zM20.5 422.9L20.6 421.9L498.5 186.0L498.8 186.0zM-7.1 422.9L-6.8 421.9L492.6 186.0L492.9 186.0zM-34.7 422.9L-34.3 421.9L486.7 186.0L487.0 186.0zM-89.8 422.9L-89.3 421.9L474.9 186.0L475.2 186.0zM-117.4 422.9L-116.8 421.9L469.1 186.0L469.3 186.0zM-145.0 422.9L-144.3 421.9L463.2 186.0L463.5 186.0zM-200.1 422.9L-199.2 421.9L451.4 186.0L451.7 186.0zM-227.7 422.9L-226.7 421.9L445.5 186.0L445.8 186.0zM-255.3 422.9L-254.2 421.9L439.7 186.0L439.9 186.0zM-310.4 422.9L-309.1 421.9L427.9 186.0L428.2 186.0zM-338.0 422.9L-336.6 421.9L422.0 186.0L422.3 186.0zM-365.6 422.9L-364.1 421.9L416.1 186.0L416.4 186.0zM-420.7 422.9L-419.1 421.9L404.4 186.0L404.6 186.0zM-448.3 422.9L-446.6 421.9L398.5 186.0L398.7 186.0zM-475.8 422.9L-474.0 421.9L392.6 186.0L392.9 186.0zM-531.0 422.9L-529.0 421.9L380.9 186.0L381.1 186.0zM-558.6 422.9L-556.5 421.9L375.0 186.0L375.2 186.0zM-586.1 422.9L-584.0 421.9L369.1 186.0L369.3 186.0zM-641.3 422.9L-638.9 421.9L357.3 186.0L357.6 186.0zM-668.9 422.9L-666.4 421.9L351.5 186.0L351.7 186.0zM-696.4 422.9L-693.9 421.9L345.6 186.0L345.8 186.0zM-751.6 422.9L-748.9 421.9L333.8 186.0L334.0 186.0zM-779.2 422.9L-776.3 421.9L327.9 186.0L328.1 186.0zM-806.7 422.9L-803.8 421.9L322.1 186.0L322.2 186.0zM-861.9 422.9L-858.8 421.9L310.3 186.0L310.5 186.0zM-889.5 422.9L-886.3 421.9L304.4 186.0L304.6 186.0zM-917.0 422.9L-913.8 421.9L298.6 186.0L298.7 186.0zM-972.2 422.9L-968.7 421.9L286.8 186.0L286.9 186.0zM-999.8 422.9L-996.2 421.9L280.9 186.0L281.1 186.0zM-1027.3 422.9L-1023.7 421.9L275.0 186.0L275.2 186.0zM-1082.5 422.9L-1078.7 421.9L263.3 186.0L263.4 186.0zM-1110.1 422.9L-1106.1 421.9L257.4 186.0L257.5 186.0zM-1127.7 421.2L-1123.7 420.2L251.5 186.0L251.6 186.0zM-1021.3 394.6L-1018.0 393.7L239.8 186.0L239.9 186.0zM-974.9 382.9L-971.9 382.2L233.9 186.0L234.0 186.0zM-932.3 372.3L-929.6 371.6L228.0 186.0L228.1 186.0zM-856.8 353.3L-854.4 352.7L216.2 186.0L216.3 186.0zM-823.2 344.9L-821.0 344.3L210.4 186.0L210.5 186.0zM-791.9 337.1L-789.8 336.5L204.5 186.0L204.6 186.0zM-735.5 322.9L-733.7 322.5L192.7 186.0L192.8 186.0zM-710.0 316.5L-708.3 316.1L186.8 186.0L186.9 186.0zM-686.1 310.5L-684.5 310.1L181.0 186.0L181.0 186.0zM-642.3 299.6L-640.9 299.2L169.2 186.0L169.3 186.0zM-622.3 294.6L-621.0 294.2L163.3 186.0L163.4 186.0zM-603.4 289.8L-602.2 289.5L157.4 186.0L157.5 186.0zM-568.6 281.1L-567.4 280.8L145.7 186.0L145.7 186.0zM-552.5 277.1L-551.4 276.8L139.8 186.0L139.9 186.0zM-537.1 273.2L-536.1 273.0L133.9 186.0L134.0 186.0zM-508.7 266.1L-507.8 265.9L122.2 186.0L122.2 186.0zM-495.4 262.8L-494.6 262.6L116.3 186.0L116.3 186.0z"/><path fill="#5f677d" fill-opacity=".9" d="M175.1 423.2L177.5 421.6L90.9 186.0L90.2 186.0zM280.0 423.2L281.9 421.6L113.2 186.0L112.6 186.0zM385.0 423.2L386.3 421.6L135.6 186.0L135.0 186.0zM490.0 423.2L490.7 421.6L157.9 186.0L157.4 186.0zM595.0 423.2L595.2 421.6L180.3 186.0L179.8 186.0zM700.0 423.2L699.6 421.6L202.6 186.0L202.1 186.0zM804.9 423.2L804.0 421.6L225.0 186.0L224.5 186.0zM909.9 423.2L908.4 421.6L247.3 186.0L246.9 186.0zM1014.9 423.2L1012.8 421.6L269.7 186.0L269.3 186.0zM1119.9 423.2L1117.2 421.6L292.1 186.0L291.7 186.0zM1224.9 423.2L1221.7 421.6L314.4 186.0L314.1 186.0zM1329.9 423.2L1326.1 421.6L336.8 186.0L336.4 186.0zM1434.8 423.2L1430.5 421.6L359.1 186.0L358.8 186.0zM1539.8 423.2L1534.9 421.6L381.5 186.0L381.2 186.0zM1644.8 423.2L1639.3 421.6L403.8 186.0L403.6 186.0zM1749.8 423.2L1743.7 421.6L426.2 186.0L426.0 186.0zM1854.8 423.2L1848.1 421.6L448.6 186.0L448.3 186.0zM1694.6 381.0L1689.7 379.8L470.9 186.0L470.7 186.0zM1546.9 345.1L1543.2 344.2L493.3 186.0L493.1 186.0zM1435.1 317.9L1432.3 317.2L515.6 186.0L515.5 186.0zM1347.6 296.6L1345.4 296.1L538.0 186.0L537.9 186.0zM1277.2 279.5L1275.4 279.1L560.3 186.0L560.3 186.0zM489.7 423.3L487.3 421.5L598.0 186.5L598.7 186.6zM379.3 423.3L377.5 421.5L574.8 186.0L575.4 186.0zM268.9 423.3L267.7 421.5L551.2 186.0L551.8 186.0zM158.5 423.3L157.9 421.5L527.7 186.0L528.3 186.0zM48.0 423.3L48.1 421.5L504.2 186.0L504.8 186.0zM-62.4 423.3L-61.7 421.5L480.7 186.0L481.2 186.0zM-172.8 423.3L-171.5 421.5L457.2 186.0L457.7 186.0zM-283.2 423.3L-281.3 421.5L433.7 186.0L434.1 186.0zM-393.7 423.3L-391.1 421.5L410.2 186.0L410.6 186.0zM-504.1 423.3L-500.9 421.5L386.7 186.0L387.1 186.0zM-614.5 423.3L-610.7 421.5L363.1 186.0L363.5 186.0zM-725.0 423.3L-720.5 421.5L339.6 186.0L340.0 186.0zM-835.4 423.3L-830.3 421.5L316.1 186.0L316.4 186.0zM-945.8 423.3L-940.1 421.5L292.6 186.0L292.9 186.0zM-1056.2 423.3L-1049.9 421.5L269.1 186.0L269.3 186.0zM-1073.3 407.6L-1067.1 406.0L245.6 186.0L245.8 186.0zM-894.0 362.6L-889.6 361.6L222.1 186.0L222.3 186.0zM-763.4 329.9L-760.2 329.1L198.6 186.0L198.7 186.0zM-664.1 305.0L-661.5 304.4L175.1 186.0L175.2 186.0zM-585.9 285.5L-583.9 284.9L151.5 186.0L151.6 186.0zM-522.9 269.7L-521.3 269.2L128.0 186.0L128.1 186.0z"/></g><polygon points="112,127.7 340.6,125.5 560,128 560,420 112,420" fill="url(#fog)"/><polygon points="266.8,241.3 333.9,281.5 333.9,290.4 267.7,248.5" fill="#b1b7c5"/><polygon points="333.9,281.5 405.3,242.8 404.3,250.1 333.9,290.4" fill="#bec4d1"/><polygon points="266.8,241.3 336.6,218.2 405.3,242.8 333.9,281.5" fill="#c5cbd8"/><path d="M349.1 236.4L347.2 235.8L345.1 235.2L343.0 234.7L340.7 234.4L338.3 234.2L335.9 234.1L333.5 234.1L331.2 234.3L328.9 234.6L326.7 235.0L324.6 235.5L322.7 236.2L320.9 236.9L319.4 237.7L318.1 238.6L317.1 239.6L316.4 240.7L316.0 241.7L316.0 242.9L316.3 244.0L316.9 245.1L317.9 246.1L319.2 247.1L320.8 248.0L322.7 248.9L324.8 249.6L327.2 250.2L329.8 250.6L332.5 250.9L335.2 251.0L338.0 250.9L340.7 250.7L343.3 250.3L345.7 249.8L347.9 249.2L349.9 248.4L351.6 247.5L353.0 246.5L354.1 245.5L354.8 244.4L355.2 243.3L355.2 242.2L354.9 241.1L354.3 240.0L353.4 239.0L352.2 238.1L350.7 237.2zM348.0 238.1L349.2 238.8L350.1 239.6L350.8 240.4L351.3 241.2L351.5 242.1L351.5 243.0L351.1 243.9L350.5 244.8L349.6 245.6L348.5 246.4L347.1 247.1L345.5 247.7L343.7 248.3L341.7 248.7L339.7 249.0L337.5 249.2L335.3 249.2L333.1 249.1L330.9 248.9L328.9 248.5L327.0 248.1L325.2 247.5L323.7 246.9L322.3 246.1L321.3 245.3L320.5 244.5L319.9 243.6L319.7 242.7L319.7 241.8L320.0 240.9L320.5 240.1L321.3 239.3L322.4 238.5L323.6 237.8L325.0 237.2L326.6 236.7L328.3 236.2L330.1 235.9L332.0 235.7L333.9 235.5L335.9 235.5L337.8 235.6L339.8 235.7L341.6 236.0L343.4 236.4L345.1 236.9L346.6 237.4z" fill="#1e2438"/><path d="M352.7 224.0L352.0 225.1L349.3 226.8L346.5 228.2L343.7 229.4L340.9 230.3L338.1 230.9L335.4 231.3L332.7 231.3L330.1 231.0L327.7 230.4L325.4 229.5L323.3 228.2L321.4 226.7L319.7 225.0L320.1 223.7L319.4 225.0L320.2 227.0L320.5 228.8L320.5 230.4L319.9 231.9L318.9 233.2L317.3 234.2L315.3 235.0L312.7 235.6L309.7 235.8L306.2 235.8L302.2 235.5L297.8 234.9L293.0 234.0L289.7 233.8L292.9 234.2L297.2 235.5L300.9 236.8L303.9 238.1L306.1 239.4L307.6 240.7L308.2 242.0L308.0 243.3L306.9 244.5L304.8 245.7L301.8 246.9L297.7 248.1L292.6 249.2L286.4 250.3L282.2 250.2L286.6 250.5L293.2 249.9L299.1 249.6L304.2 249.5L308.5 249.7L312.1 250.2L315.0 250.9L317.2 251.9L318.5 253.2L319.1 254.9L318.8 256.9L317.7 259.2L315.6 262.0L312.4 265.2L311.3 267.5L312.8 265.3L317.3 262.2L321.4 259.8L325.3 257.8L329.0 256.4L332.5 255.4L335.9 255.0L339.1 254.9L342.3 255.4L345.4 256.3L348.5 257.7L351.5 259.7L354.6 262.3L357.7 265.6L357.8 268.1L358.1 265.5L356.1 261.9L354.9 258.8L354.3 256.2L354.4 254.0L355.2 252.2L356.6 250.8L358.5 249.8L361.2 249.1L364.4 248.8L368.4 248.8L373.0 249.2L378.4 249.9L384.6 251.1L388.7 251.4L384.7 250.9L378.6 249.2L373.6 247.6L369.5 246.1L366.4 244.6L364.2 243.2L362.9 241.9L362.6 240.7L363.1 239.5L364.5 238.4L366.8 237.4L369.9 236.4L373.9 235.5L378.8 234.6L382.6 234.7L378.6 234.5L373.1 235.0L368.0 235.2L363.5 235.3L359.6 235.1L356.2 234.7L353.5 234.2L351.4 233.4L350.0 232.5L349.2 231.3L349.0 230.0L349.5 228.6L350.6 226.9L352.3 225.2zM346.3 231.3L346.0 232.0L345.9 232.7L346.3 233.4L346.9 234.1L347.8 234.7L349.0 235.3L350.5 235.9L352.1 236.3L353.9 236.7L355.8 237.1L357.8 237.3L359.9 237.4L362.0 237.4L364.1 237.2L362.2 237.5L360.6 237.9L359.3 238.4L358.4 239.1L357.7 239.8L357.3 240.5L357.2 241.3L357.4 242.2L357.8 243.1L358.6 244.0L359.6 244.8L360.8 245.7L362.4 246.5L364.1 247.2L366.2 247.8L364.0 247.3L362.0 247.1L360.0 247.0L358.0 247.2L356.2 247.4L354.5 247.9L353.0 248.4L351.6 249.1L350.4 249.9L349.4 250.8L348.6 251.8L348.1 252.8L347.9 253.9L348.1 255.0L348.6 256.2L347.7 255.1L346.5 254.2L345.0 253.5L343.3 252.9L341.5 252.5L339.4 252.2L337.3 252.1L335.2 252.1L332.9 252.2L330.8 252.5L328.6 252.9L326.6 253.4L324.7 254.1L322.9 254.9L321.4 255.9L322.5 254.9L323.2 253.8L323.4 252.9L323.2 251.9L322.6 251.0L321.7 250.2L320.5 249.4L319.1 248.7L317.4 248.2L315.6 247.7L313.6 247.3L311.5 247.0L309.3 246.9L307.0 246.9L304.7 247.1L306.9 246.7L308.8 246.3L310.4 245.7L311.7 245.0L312.7 244.2L313.4 243.4L313.8 242.6L313.9 241.7L313.8 240.9L313.4 240.0L312.7 239.2L311.8 238.5L310.7 237.8L309.3 237.2L307.7 236.7L309.5 237.0L311.3 237.2L313.1 237.3L314.9 237.2L316.7 236.9L318.4 236.6L319.9 236.1L321.3 235.6L322.6 234.9L323.6 234.3L324.4 233.5L325.0 232.8L325.3 232.0L325.3 231.2L325.1 230.4L325.7 231.2L326.5 231.8L327.7 232.3L329.1 232.7L330.6 233.0L332.3 233.2L334.1 233.3L336.0 233.3L337.9 233.2L339.7 233.0L341.5 232.7L343.2 232.3L344.7 231.9L346.0 231.3L347.1 230.7z" fill="#1e2438" fill-rule="evenodd"/><g><path d="M534.600 85.400c3.600 0 8.600 1.800 11.300 4.300 1.500 1.400 1.900 3 1.900 5.200v5.600c0 2-.6 3.400-2.200 4.700l-9.600 8c-1 .8-1.900.8-2.900 0l-8.800-7.600c-1.500-1.300-2.100-2.600-2.100-4.600v-6.400c0-2.200.6-3.800 2.200-5.100 2.800-2.400 6.800-4.100 10.200-4.100z" fill="#e6e9ed" fill-opacity=".92"/><path d="M522.400 93c0-1.600.7-3 2.200-4.200l9.400 3.800v21.200c-.5 0-1-.2-1.500-.6l-8.800-7.600c-1.500-1.300-2.100-2.600-2.100-4.600z" fill="#cdd2d9" fill-opacity=".5"/><path d="M534 88.400v25.200" stroke="#45d070" stroke-width=".6"/><path d="M532.600 88.400h2.800" stroke="#45d070" stroke-width=".7"/><path d="M534 113.600l-12.400-10.200" stroke="#d86a80" stroke-width=".8"/><path d="M520.600 101.800l2.200 2.600" stroke="#d86a80" stroke-width=".7"/><path d="M534 113.600l13.200-10.600" stroke="#3f66f2" stroke-width=".8"/><path d="M546.200 101.600l2.200 2.400" stroke="#3f66f2" stroke-width=".7"/><text x="525.800" y="99.600" font-size="2.700" fill="#9099a3" font-family="Liberation Sans,sans-serif" transform="rotate(33 525.8 99.6)">Front</text><text x="539.600" y="102.800" font-size="2.700" fill="#9099a3" font-family="Liberation Sans,sans-serif" transform="rotate(-35 539.6 102.8)">Left</text><text x="532.400" y="88" font-size="1.800" fill="#b4bcc5" font-family="Liberation Sans,sans-serif">Top</text></g></g></svg>
<div style="left:0px;top:0px;width:710px;height:1px;background:#6c6c6c;"></div>
<div style="left:1px;top:1px;width:708px;height:1px;background:#ececec;"></div>
<div style="left:0px;top:442px;width:710px;height:1px;background:#8a8a8a;"></div>
<div style="left:0px;top:1px;width:1px;height:441px;background:#b2b6be;"></div>
<div style="left:709px;top:1px;width:1px;height:441px;background:#a0a0a0;"></div>
<div style="left:708px;top:1px;width:1px;height:441px;background:#dedede;"></div>
</div></body></html>
